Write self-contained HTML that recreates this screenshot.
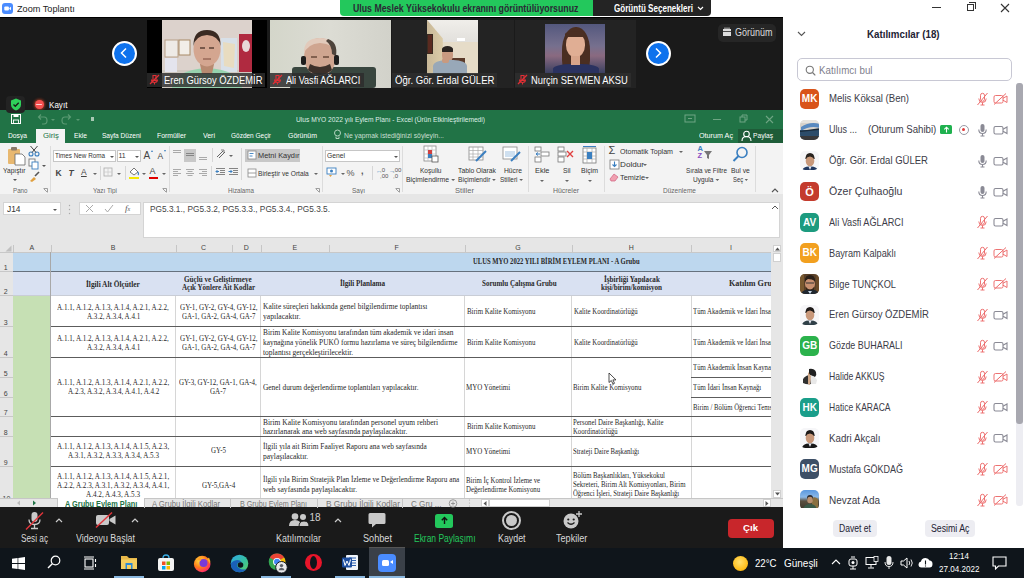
<!DOCTYPE html>
<html><head><meta charset="utf-8">
<style>
*{margin:0;padding:0;box-sizing:border-box}
html,body{width:1024px;height:578px;overflow:hidden;background:#1a1a1a;font-family:"Liberation Sans",sans-serif}
.a{position:absolute}
.t{position:absolute;white-space:nowrap;line-height:1}
.serif{font-family:"Liberation Serif",serif}
.dd{display:inline-block;width:0;height:0;border-left:2px solid transparent;border-right:2px solid transparent;border-top:2.5px solid #666;vertical-align:middle}
</style></head><body>
<div class="a" style="left:0;top:0;width:1024px;height:578px;overflow:hidden">

<!-- ===== TITLE BAR ===== -->
<div class="a" style="left:0;top:0;width:1024px;height:17px;background:#fff"></div>
<div class="a" style="left:0;top:17px;width:783px;height:1px;background:#000"></div>
<!-- zoom logo -->
<svg class="a" style="left:2px;top:3px" width="11" height="11"><rect x="0" y="0" width="11" height="11" rx="3" fill="#4a8cff"/><rect x="2.3" y="3.5" width="4.6" height="4" rx="1" fill="#fff"/><path d="M7.3 4.9L9 3.8V7.2L7.3 6.1Z" fill="#fff"/></svg>
<div class="t" style="transform:scaleX(0.9955);transform-origin:0 0;left:17.2px;top:4.6px;font-size:9.2px;color:#222">Zoom Toplantı</div>

<!-- window controls -->
<div class="a" style="left:932px;top:7px;width:9px;height:1px;background:#333"></div>
<div class="a" style="left:967px;top:4px;width:7px;height:7px;border:1px solid #333"></div>
<div class="a" style="left:969px;top:2px;width:7px;height:7px;border-top:1px solid #333;border-right:1px solid #333"></div>
<svg class="a" style="left:1000px;top:3px" width="10" height="10"><path d="M1 1L9 9M9 1L1 9" stroke="#333" stroke-width="1.1"/></svg>

<!-- share banner -->
<div class="a" style="left:339.5px;top:0;width:253px;height:15.5px;background:#23c85c;border-radius:0 0 0 4px"></div>
<div class="t" style="transform:scaleX(0.8767);transform-origin:0 0;left:353.4px;top:3.7px;font-size:10px;font-weight:bold;color:#2a2a35">Ulus Meslek Yüksekokulu ekranını görüntülüyorsunuz</div>
<div class="a" style="left:592.5px;top:0;width:118.5px;height:15.5px;background:#242424;border-radius:0 0 4px 0"></div>
<div class="t" style="transform:scaleX(0.8066);transform-origin:0 0;left:614.4px;top:3.7px;font-size:10px;font-weight:bold;color:#fff">Görüntü Seçenekleri</div>
<svg class="a" style="left:697px;top:6px" width="7" height="5"><path d="M1 1L3.5 3.5L6 1" stroke="#fff" stroke-width="1.2" fill="none"/></svg>

<!-- ===== ZOOM GALLERY STRIP ===== -->
<!-- prev button -->
<div class="a" style="left:111.5px;top:40.5px;width:25px;height:25px;border-radius:50%;background:#fff"></div>
<div class="a" style="left:113.5px;top:42.5px;width:21px;height:21px;border-radius:50%;background:#0e72ed"></div>
<svg class="a" style="left:118px;top:47px" width="12" height="12"><path d="M8 1.5L3.5 6L8 10.5" stroke="#fff" stroke-width="1.5" fill="none"/></svg>
<!-- next button -->
<div class="a" style="left:645.5px;top:40.5px;width:25px;height:25px;border-radius:50%;background:#fff"></div>
<div class="a" style="left:647.5px;top:42.5px;width:21px;height:21px;border-radius:50%;background:#0e72ed"></div>
<svg class="a" style="left:652px;top:47px" width="12" height="12"><path d="M4 1.5L8.5 6L4 10.5" stroke="#fff" stroke-width="1.5" fill="none"/></svg>

<!-- thumb 1 -->
<div class="a" style="left:147px;top:19.5px;width:120px;height:68px;background:#000"></div>
<svg class="a" style="left:162px;top:19.5px" width="90" height="68">
 <rect width="90" height="68" fill="#dcd2cc"/>
 <rect x="0" y="50" width="90" height="18" fill="#cfc8c0"/>
 <rect x="3" y="20" width="13" height="17" fill="#eeeae6" stroke="#b8a088" stroke-width="1"/>
 <rect x="17" y="20" width="11" height="15" fill="#f2eee8" stroke="#a88a66" stroke-width="1"/>
 <rect x="3" y="38" width="12" height="14" fill="#e4e4ee"/>
 <rect x="59" y="18" width="16" height="34" fill="#d8e0e8"/>
 <path d="M61 22L73 24L72 48L62 46Z" fill="#e8dcc0"/>
 <rect x="77" y="14" width="13" height="38" fill="#b02a40"/>
 <ellipse cx="84" cy="26" rx="4" ry="6" fill="#e8d8d8"/>
 <path d="M10 68Q12 50 45 48Q78 50 80 68Z" fill="#96d2ae"/>
 <path d="M38 44L52 44L50 54L40 54Z" fill="#b88a70"/>
 <ellipse cx="45" cy="29" rx="13.5" ry="17.5" fill="#d4a690"/>
 <path d="M31.5 26Q31 10 45 10Q59 10 58.5 26Q57 16 45 15Q33 16 31.5 26Z" fill="#3a2a22"/>
 <path d="M38 28h5M47 28h5" stroke="#5a4034" stroke-width="1.6"/>
 <path d="M41 39h8" stroke="#8a5a4a" stroke-width="1.2"/>
</svg>
<div class="a" style="left:147px;top:72.5px;width:118px;height:14.5px;background:rgba(45,45,45,0.82)"></div>
<svg class="a" style="left:149px;top:74px" width="11" height="11"><path d="M4 1.5h3v5h-3z M2.5 5.5q0 3 3 3q3 0 3-3 M5.5 8.5v2" stroke="#e02f35" stroke-width="1.1" fill="none"/><path d="M1 10L10 1" stroke="#e02f35" stroke-width="1.2"/></svg>
<div class="t" style="transform:scaleX(0.8932);transform-origin:0 0;left:163.5px;top:75px;font-size:10.5px;color:#fff">Eren Gürsoy ÖZDEMİR</div>

<!-- thumb 2 -->
<svg class="a" style="left:269.5px;top:19.5px" width="121" height="68">
 <defs><linearGradient id="t2g" x1="0" y1="0" x2="1" y2="0"><stop offset="0" stop-color="#d4d6ca"/><stop offset="0.5" stop-color="#dcdcd4"/><stop offset="1" stop-color="#d2d2ca"/></linearGradient></defs>
 <rect width="121" height="68" fill="url(#t2g)"/>
 <rect x="22" y="47" width="84" height="21" rx="3" fill="#39463f"/>
 <path d="M20 68Q22 52 50 52Q78 52 80 68Z" fill="#2e3834"/>
 <ellipse cx="50" cy="37" rx="16" ry="19" fill="#cfa590"/>
 <path d="M34 34Q33 18 50 18Q67 18 66 34Q64 24 50 23Q37 24 34 34Z" fill="#e2cabb"/>
 <path d="M58 19Q68 22 66 36L62 34Q62 25 56 21Z" fill="#4e443c"/>
 <path d="M38 50Q50 60 62 50L60 44Q50 50 40 44Z" fill="#3c302a"/>
 <path d="M41 37h6M53 37h6" stroke="#6a4a3a" stroke-width="1.3"/>
 <rect x="31" y="36" width="5" height="9" rx="2" fill="#1e1e1e"/>
 <rect x="64" y="35" width="5" height="10" rx="2" fill="#1e1e1e"/>
</svg>
<div class="a" style="left:269.5px;top:72.5px;width:94px;height:14.5px;background:rgba(45,45,45,0.85)"></div>
<svg class="a" style="left:272px;top:74px" width="11" height="11"><path d="M4 1.5h3v5h-3z M2.5 5.5q0 3 3 3q3 0 3-3 M5.5 8.5v2" stroke="#e02f35" stroke-width="1.1" fill="none"/><path d="M1 10L10 1" stroke="#e02f35" stroke-width="1.2"/></svg>
<div class="t" style="transform:scaleX(0.8669);transform-origin:0 0;left:286.1px;top:75px;font-size:10.5px;color:#fff">Ali Vasfi AĞLARCI</div>

<!-- thumb 3 -->
<div class="a" style="left:392px;top:19.5px;width:122px;height:68px;background:#232323"></div>
<div class="a" style="left:426.8px;top:19.5px;width:51px;height:54px;overflow:hidden;background:#e4e0da">
 <div class="a" style="left:0;top:0;width:51px;height:22px;background:linear-gradient(180deg,#f0eeea,#e2e0dc)"></div>
 <div class="a" style="left:14px;top:22px;width:37px;height:32px;background:#e6dcc8"></div>
 <div class="a" style="left:0;top:0;width:16px;height:54px;background:linear-gradient(90deg,#c8b898,#dccca8);clip-path:polygon(0 0,100% 35%,100% 100%,0 100%)"></div>
 <div class="a" style="left:0;top:14px;width:6px;height:20px;background:#5a2a20;border:1px solid #3a2a20"></div>
 <div class="a" style="left:30px;top:18px;width:8px;height:3px;background:#fff"></div>
 <div class="a" style="left:24px;top:38px;width:14px;height:8px;background:#5a3a2a"></div>
 <div class="a" style="left:15px;top:28px;width:11px;height:14px;border-radius:45%;background:#c89a80"></div>
 <div class="a" style="left:15px;top:26px;width:11px;height:6px;border-radius:50% 50% 10% 10%;background:#2a2420"></div>
 <div class="a" style="left:6px;top:40px;width:34px;height:16px;border-radius:40% 40% 0 0;background:#98a8b8"></div>
 <div class="a" style="left:15px;top:38px;width:7px;height:5px;border-radius:40%;background:#c89a80"></div>
</div>
<div class="a" style="left:392px;top:72.5px;width:105px;height:14.5px;background:rgba(45,45,45,0.9)"></div>
<div class="t" style="transform:scaleX(0.9118);transform-origin:0 0;left:395.3px;top:75px;font-size:10.5px;color:#fff">Öğr. Gör. Erdal GÜLER</div>

<!-- thumb 4 -->
<div class="a" style="left:514.7px;top:19.5px;width:121.3px;height:68px;background:#232323"></div>
<div class="a" style="left:545px;top:23.5px;width:60px;height:49.5px;overflow:hidden;background:linear-gradient(180deg,#54587e 0%,#76708e 45%,#8a6a80 65%,#3a4060 100%)">
 <div class="a" style="left:17px;top:3px;width:28px;height:48px;border-radius:48% 48% 30% 30%;background:#4a2e22"></div>
 <div class="a" style="left:21px;top:9px;width:19px;height:24px;border-radius:45% 45% 48% 48%;background:#e0ae94"></div>
 <div class="a" style="left:20px;top:7px;width:20px;height:6px;border-radius:50% 50% 0 0;background:#4a2e22"></div>
 <div class="a" style="left:8px;top:40px;width:46px;height:12px;border-radius:40% 40% 0 0;background:#2a3260"></div>
 <div class="a" style="left:26px;top:32px;width:9px;height:9px;background:#d8a48a"></div>
</div>
<div class="a" style="left:514.7px;top:73px;width:116.3px;height:13.5px;background:rgba(45,45,45,0.9)"></div>
<svg class="a" style="left:517px;top:74px" width="11" height="11"><path d="M4 1.5h3v5h-3z M2.5 5.5q0 3 3 3q3 0 3-3 M5.5 8.5v2" stroke="#e02f35" stroke-width="1.1" fill="none"/><path d="M1 10L10 1" stroke="#e02f35" stroke-width="1.2"/></svg>
<div class="t" style="transform:scaleX(0.8918);transform-origin:0 0;left:531.2px;top:75px;font-size:10.5px;color:#fff">Nurçin SEYMEN AKSU</div>

<!-- Görünüm -->
<div class="a" style="left:718px;top:23.5px;width:58px;height:18.5px;border-radius:5px;background:#262626"></div>
<svg class="a" style="left:722px;top:27px" width="10" height="10"><rect x="1" y="2" width="8" height="7" fill="#ddd"/><path d="M3 2v-1.5M5 2v-1.5M7 2v-1.5" stroke="#ddd" stroke-width="1"/><path d="M1 4.5h8" stroke="#262626" stroke-width=".8"/></svg>
<div class="t" style="transform:scaleX(0.8972);transform-origin:0 0;left:734.6px;top:27.5px;font-size:10px;color:#ddd">Görünüm</div>

<!-- Kayıt row -->
<div class="a" style="left:6px;top:95.5px;width:18.5px;height:17.5px;border-radius:4px;background:#232323;z-index:5"></div>
<svg class="a" style="left:9.5px;top:98px;z-index:6" width="12" height="13"><path d="M6 0.5L11 2.5V6.5Q11 10.5 6 12.5Q1 10.5 1 6.5V2.5Z" fill="#2fd05a"/><path d="M3.5 6.5L5.3 8.3L8.7 4.8" stroke="#1a1a1a" stroke-width="1.3" fill="none"/></svg>
<div class="a" style="left:34.5px;top:100.3px;width:9px;height:9px;border-radius:50%;background:#f45050;box-shadow:0 0 2.5px 1px rgba(255,80,40,0.55)"></div>
<div class="a" style="left:36px;top:103.6px;width:6px;height:1.6px;border-radius:1px;background:#ffd0d0"></div>
<div class="t" style="transform:scaleX(0.8496);transform-origin:0 0;left:49.4px;top:99.5px;font-size:9.5px;color:#fff">Kayıt</div>

<!-- ===== EXCEL ===== -->
<!--EXCEL-->
<div class="a" style="left:0;top:109.5px;width:783px;height:33px;background:#217346"></div>
<!-- Save / undo / redo -->
<svg class="a" style="left:10.5px;top:114px" width="10" height="10"><rect x="0.5" y="0.5" width="9" height="9" fill="none" stroke="#fff" stroke-width="1"/><rect x="2.5" y="0.5" width="5" height="2.5" fill="#fff"/><rect x="2.5" y="6" width="5" height="3.5" fill="none" stroke="#fff" stroke-width=".9"/></svg>
<svg class="a" style="left:36px;top:113px" width="12" height="12"><path d="M3 4h5q3 0 3 3.5t-3 3.5h-2M5 1.5L2.5 4L5 6.5" stroke="#5a9a73" stroke-width="1.2" fill="none"/></svg>
<div class="a" style="left:50.5px;top:118.5px;width:0;height:0;border-left:2px solid transparent;border-right:2px solid transparent;border-top:2.5px solid #5a9a73"></div>
<svg class="a" style="left:61px;top:113px" width="12" height="12"><path d="M9 4h-5q-3 0-3 3.5t3 3.5h2M7 1.5L9.5 4L7 6.5" stroke="#5a9a73" stroke-width="1.2" fill="none"/></svg>
<div class="a" style="left:75.5px;top:118.5px;width:0;height:0;border-left:2px solid transparent;border-right:2px solid transparent;border-top:2.5px solid #5a9a73"></div>
<div class="a" style="left:91px;top:117px;width:3px;height:4px;background:#a8c8b4"></div>
<div class="t" style="transform:scaleX(0.9489);transform-origin:0 0;left:296px;top:116px;font-size:7px;color:#dfeee5">Ulus MYO 2022 yılı Eylem Planı - Excel (Ürün Etkinleştirilemedi)</div>
<!-- title bar right icons -->
<svg class="a" style="left:684px;top:114px" width="12" height="9"><rect x="1" y="1" width="10" height="7" fill="none" stroke="#6fa584" stroke-width="1"/><path d="M4 4.5h4" stroke="#6fa584"/></svg>
<div class="a" style="left:713px;top:119px;width:8px;height:1px;background:#6fa584"></div>
<svg class="a" style="left:739px;top:114px" width="9" height="9"><rect x="1" y="3" width="5" height="5" fill="none" stroke="#6fa584"/><path d="M3 3V1h5v5H6" fill="none" stroke="#6fa584"/></svg>
<svg class="a" style="left:765px;top:114.5px" width="9" height="9"><path d="M1 1L8 8M8 1L1 8" stroke="#6fa584" stroke-width="1.1"/></svg>
<!-- tabs -->
<div class="a" style="left:36.2px;top:128.6px;width:28.6px;height:14px;background:#f3f3f3"></div>
<div class="t" style="transform:scaleX(0.8935);transform-origin:0 0;left:7.5px;top:132px;font-size:7.5px;color:#fff">Dosya</div>
<div class="t" style="transform:scaleX(1.0375);transform-origin:0 0;left:43px;top:132px;font-size:7.5px;color:#217346">Giriş</div>
<div class="t" style="transform:scaleX(0.8908);transform-origin:0 0;left:73.5px;top:132px;font-size:7.5px;color:#fff">Ekle</div>
<div class="t" style="transform:scaleX(0.8743);transform-origin:0 0;left:101.5px;top:132px;font-size:7.5px;color:#fff">Sayfa Düzeni</div>
<div class="t" style="transform:scaleX(0.9156);transform-origin:0 0;left:157px;top:132px;font-size:7.5px;color:#fff">Formüller</div>
<div class="t" style="transform:scaleX(0.9275);transform-origin:0 0;left:202.5px;top:132px;font-size:7.5px;color:#fff">Veri</div>
<div class="t" style="transform:scaleX(0.8643);transform-origin:0 0;left:231px;top:132px;font-size:7.5px;color:#fff">Gözden Geçir</div>
<div class="t" style="transform:scaleX(0.9275);transform-origin:0 0;left:288px;top:132px;font-size:7.5px;color:#fff">Görünüm</div>
<svg class="a" style="left:333px;top:129px" width="9" height="11"><circle cx="4.5" cy="4" r="3" fill="none" stroke="#b5d4c0" stroke-width="1"/><path d="M3 7.5v2h3v-2" fill="none" stroke="#b5d4c0"/></svg>
<div class="t" style="transform:scaleX(0.9087);transform-origin:0 0;left:344px;top:132px;font-size:7.5px;color:#c8dfd0">Ne yapmak istediğinizi söyleyin...</div>
<div class="t" style="transform:scaleX(0.9594);transform-origin:0 0;left:699px;top:132px;font-size:7.5px;color:#fff">Oturum Aç</div>
<div class="a" style="left:738.4px;top:129px;width:44.6px;height:13.5px;background:#1e5c38"></div>
<svg class="a" style="left:741px;top:129.5px" width="12" height="12"><circle cx="5.5" cy="4" r="2.8" fill="none" stroke="#fff" stroke-width="1.1"/><path d="M1 11q0-4.5 4.5-4.5q4.5 0 4.5 4.5" fill="none" stroke="#fff" stroke-width="1.1"/></svg>
<div class="t" style="transform:scaleX(0.8883);transform-origin:0 0;left:752.5px;top:132px;font-size:7.5px;color:#fff">Paylaş</div>

<!-- ribbon body -->
<div class="a" style="left:0;top:142.5px;width:783px;height:51.8px;background:#f3f3f3"></div>
<div class="a" style="left:0;top:193.5px;width:783px;height:1px;background:#dcdcdc"></div>
<!-- group separators -->
<div class="a" style="left:50.3px;top:146px;width:1px;height:46px;background:#dcdcdc"></div>
<div class="a" style="left:168.8px;top:146px;width:1px;height:46px;background:#dcdcdc"></div>
<div class="a" style="left:322.4px;top:146px;width:1px;height:46px;background:#dcdcdc"></div>
<div class="a" style="left:402.4px;top:146px;width:1px;height:46px;background:#dcdcdc"></div>
<div class="a" style="left:527.5px;top:146px;width:1px;height:46px;background:#dcdcdc"></div>
<div class="a" style="left:604px;top:146px;width:1px;height:46px;background:#dcdcdc"></div>
<div class="a" style="left:755px;top:146px;width:1px;height:46px;background:#dcdcdc"></div>
<!-- group labels -->
<div class="t" style="transform:scaleX(0.9547);transform-origin:0 0;left:13px;top:187.5px;font-size:6.5px;color:#666">Pano</div>
<div class="t" style="transform:scaleX(0.9815);transform-origin:0 0;left:92.5px;top:187.5px;font-size:6.5px;color:#666">Yazı Tipi</div>
<div class="t" style="transform:scaleX(0.9596);transform-origin:0 0;left:228px;top:187.5px;font-size:6.5px;color:#666">Hizalama</div>
<div class="t" style="transform:scaleX(0.9988);transform-origin:0 0;left:352px;top:187.5px;font-size:6.5px;color:#666">Sayı</div>
<div class="t" style="transform:scaleX(1.1681);transform-origin:0 0;left:454.5px;top:187.5px;font-size:6.5px;color:#666">Stiller</div>
<div class="t" style="transform:scaleX(1.0585);transform-origin:0 0;left:553px;top:187.5px;font-size:6.5px;color:#666">Hücreler</div>
<div class="t" style="transform:scaleX(1.0033);transform-origin:0 0;left:662.5px;top:187.5px;font-size:6.5px;color:#666">Düzenleme</div>
<svg class="a" style="left:43px;top:188px" width="5" height="5"><path d="M0.5 0.5h4v4" fill="none" stroke="#888" stroke-width=".8"/><path d="M1 1L4 4" stroke="#888" stroke-width=".8"/></svg>
<svg class="a" style="left:162px;top:188px" width="5" height="5"><path d="M0.5 0.5h4v4" fill="none" stroke="#888" stroke-width=".8"/><path d="M1 1L4 4" stroke="#888" stroke-width=".8"/></svg>
<svg class="a" style="left:315px;top:188px" width="5" height="5"><path d="M0.5 0.5h4v4" fill="none" stroke="#888" stroke-width=".8"/><path d="M1 1L4 4" stroke="#888" stroke-width=".8"/></svg>
<svg class="a" style="left:395px;top:188px" width="5" height="5"><path d="M0.5 0.5h4v4" fill="none" stroke="#888" stroke-width=".8"/><path d="M1 1L4 4" stroke="#888" stroke-width=".8"/></svg>
<svg class="a" style="left:396px;top:188px" width="5" height="5"></svg>
<svg class="a" style="left:771px;top:188px" width="8" height="5"><path d="M1 4L4 1L7 4" fill="none" stroke="#555" stroke-width="1.1"/></svg>

<!-- Pano group -->
<svg class="a" style="left:7px;top:146px" width="19" height="20"><rect x="1" y="3" width="12" height="15" rx="1" fill="#e8b870"/><rect x="4" y="1" width="6" height="3.5" rx="1" fill="#8a7a6a"/><path d="M8 8h7l3 3v8h-10z" fill="#fff" stroke="#666" stroke-width=".8"/></svg>
<div class="t" style="transform:scaleX(0.9530);transform-origin:0 0;left:3.3px;top:167px;font-size:7px;color:#333">Yapıştır</div>
<div class="a" style="left:13.0px;top:178.5px;width:0;height:0;border-left:2px solid transparent;border-right:2px solid transparent;border-top:2.5px solid #555"></div>
<svg class="a" style="left:28px;top:145px" width="12" height="12"><circle cx="3" cy="9" r="2" fill="none" stroke="#3a7fc0" stroke-width="1.1"/><circle cx="9" cy="9" r="2" fill="none" stroke="#3a7fc0" stroke-width="1.1"/><path d="M4 7.5L9.5 1M8 7.5L2.5 1" stroke="#444" stroke-width="1"/></svg>
<svg class="a" style="left:28px;top:158px" width="11" height="12"><rect x="1" y="1" width="6" height="7" fill="#fff" stroke="#777" stroke-width=".9"/><rect x="4" y="4" width="6" height="7" fill="#fff" stroke="#3a7fc0" stroke-width=".9"/></svg>
<div class="a" style="left:42.0px;top:164.5px;width:0;height:0;border-left:2px solid transparent;border-right:2px solid transparent;border-top:2.5px solid #555"></div>
<svg class="a" style="left:29px;top:171px" width="11" height="11"><path d="M6 5L10 1" stroke="#555" stroke-width="1.6"/><path d="M1 10L5 6L7 8L3 11z" fill="#e0a040"/></svg>

<!-- Yazı Tipi group -->
<div class="a" style="left:53px;top:149.5px;width:63px;height:12px;background:#fff;border:1px solid #c6c6c6"></div>
<div class="t" style="transform:scaleX(0.9029);transform-origin:0 0;left:55px;top:152px;font-size:7px;color:#333">Times New Roma</div>
<div class="a" style="left:109.5px;top:155.5px;width:0;height:0;border-left:2px solid transparent;border-right:2px solid transparent;border-top:2.5px solid #555"></div>
<div class="a" style="left:116.5px;top:149.5px;width:24px;height:12px;background:#fff;border:1px solid #c6c6c6"></div>
<div class="t" style="left:118.5px;top:152px;font-size:7px;color:#333">11</div>
<div class="a" style="left:134.5px;top:155.5px;width:0;height:0;border-left:2px solid transparent;border-right:2px solid transparent;border-top:2.5px solid #555"></div>
<div class="t" style="left:143.5px;top:150.5px;font-size:10px;color:#444">A</div>
<div class="a" style="left:151px;top:149.5px;width:0;height:0;border-left:1.5px solid transparent;border-right:1.5px solid transparent;border-bottom:2px solid #3a7fc0"></div>
<div class="t" style="left:157.5px;top:152px;font-size:8.5px;color:#444">A</div>
<div class="a" style="left:163.5px;top:149.5px;width:0;height:0;border-left:1.5px solid transparent;border-right:1.5px solid transparent;border-top:2px solid #3a7fc0"></div>
<div class="t" style="left:55.5px;top:168.5px;font-size:8.5px;font-weight:bold;color:#444">K</div>
<div class="t" style="left:68.5px;top:168.5px;font-size:8.5px;font-style:italic;font-weight:bold;color:#444">T</div>
<div class="t" style="left:81px;top:168px;font-size:8.5px;text-decoration:underline;color:#444">A</div>
<div class="a" style="left:92.5px;top:172.5px;width:0;height:0;border-left:2px solid transparent;border-right:2px solid transparent;border-top:2.5px solid #666"></div>
<div class="a" style="left:100px;top:166px;width:1px;height:14px;background:#d6d6d6"></div>
<svg class="a" style="left:103px;top:167px" width="10" height="10"><rect x="1" y="1" width="8" height="8" fill="none" stroke="#aaa" stroke-width=".8"/><path d="M5 1v8M1 5h8" stroke="#ccc" stroke-width=".8"/></svg>
<div class="a" style="left:116.5px;top:172.5px;width:0;height:0;border-left:2px solid transparent;border-right:2px solid transparent;border-top:2.5px solid #666"></div>
<div class="a" style="left:124.6px;top:166px;width:1px;height:14px;background:#d6d6d6"></div>
<svg class="a" style="left:128px;top:166px" width="12" height="12"><path d="M2 6L6 2L10 6L6 9z" fill="#fff" stroke="#666" stroke-width=".9"/><path d="M10 6q1 2 0 3" stroke="#3a7fc0" stroke-width="1.2" fill="none"/></svg>
<div class="a" style="left:129px;top:176.5px;width:9.5px;height:2px;background:#f5e800"></div>
<div class="a" style="left:142.0px;top:172.5px;width:0;height:0;border-left:2px solid transparent;border-right:2px solid transparent;border-top:2.5px solid #666"></div>
<div class="t" style="left:149.5px;top:167px;font-size:9px;color:#444">A</div>
<div class="a" style="left:148.5px;top:176.5px;width:9.5px;height:2px;background:#e00000"></div>
<div class="a" style="left:161.5px;top:172.5px;width:0;height:0;border-left:2px solid transparent;border-right:2px solid transparent;border-top:2.5px solid #666"></div>

<!-- Hizalama group -->
<svg class="a" style="left:172px;top:149px" width="10" height="10"><path d="M1 1.5h8M1 3.5h8" stroke="#8a8a8a" stroke-width=".7"/></svg>
<div class="a" style="left:184px;top:149px;width:12.3px;height:12.6px;background:#c8c8c8"></div>
<svg class="a" style="left:185px;top:150px" width="10" height="10"><path d="M1 3.5h8M1 5.5h8" stroke="#6a6a6a" stroke-width=".7"/></svg>
<svg class="a" style="left:197.5px;top:151px" width="10" height="10"><path d="M1 6.5h8M1 8.5h8" stroke="#8a8a8a" stroke-width=".7"/></svg>
<div class="a" style="left:212px;top:148px;width:1px;height:14px;background:#d6d6d6"></div>
<svg class="a" style="left:215px;top:148px" width="12" height="12"><path d="M2 9L8 3M4 10L10 4" stroke="#666" stroke-width="1"/><path d="M6 2l3 0l0 3" fill="none" stroke="#666" stroke-width=".8"/></svg>
<div class="a" style="left:228.5px;top:154.5px;width:0;height:0;border-left:2px solid transparent;border-right:2px solid transparent;border-top:2.5px solid #666"></div>
<svg class="a" style="left:172px;top:167.5px" width="10" height="10"><path d="M1 1.5h8M1 3.5h5M1 5.5h8M1 7.5h5" stroke="#8a8a8a" stroke-width=".7"/></svg>
<svg class="a" style="left:185px;top:167.5px" width="10" height="10"><path d="M1 1.5h8M2.5 3.5h5M1 5.5h8M2.5 7.5h5" stroke="#8a8a8a" stroke-width=".7"/></svg>
<svg class="a" style="left:197.5px;top:167.5px" width="10" height="10"><path d="M1 1.5h8M4 3.5h5M1 5.5h8M4 7.5h5" stroke="#8a8a8a" stroke-width=".7"/></svg>
<div class="a" style="left:211px;top:166px;width:1px;height:14px;background:#d6d6d6"></div>
<svg class="a" style="left:214.5px;top:167px" width="11" height="10"><path d="M1 1.5h9M5 3.5h5M5 5.5h5M1 7.5h9" stroke="#777" stroke-width=".9"/><path d="M4 4.5L1 4.5M2.5 3L1 4.5L2.5 6" stroke="#3a7fc0" stroke-width="1" fill="none"/></svg>
<svg class="a" style="left:227.5px;top:167px" width="11" height="10"><path d="M1 1.5h9M5 3.5h5M5 5.5h5M1 7.5h9" stroke="#777" stroke-width=".9"/><path d="M0.5 4.5L4 4.5M2.5 3L4 4.5L2.5 6" stroke="#3a7fc0" stroke-width="1" fill="none"/></svg>
<div class="a" style="left:241px;top:148px;width:1px;height:32px;background:#d6d6d6"></div>
<div class="a" style="left:245px;top:149px;width:54.6px;height:12.6px;background:#c8c8c8"></div>
<svg class="a" style="left:246.5px;top:150px" width="10" height="10"><rect x="1" y="1" width="8" height="8" fill="#fff" stroke="#888" stroke-width=".8"/><path d="M2.5 3.5h4M2.5 6h3" stroke="#3a7fc0" stroke-width=".9"/></svg>
<div class="t" style="transform:scaleX(0.9855);transform-origin:0 0;left:257.7px;top:152px;font-size:7.5px;color:#333">Metni Kaydır</div>
<svg class="a" style="left:246.5px;top:167.5px" width="10" height="10"><rect x="1" y="1" width="8" height="8" fill="#fff" stroke="#888" stroke-width=".8"/><path d="M1 5h8" stroke="#888" stroke-width=".8"/></svg>
<div class="t" style="transform:scaleX(0.8832);transform-origin:0 0;left:257.7px;top:169.5px;font-size:7.5px;color:#333">Birleştir ve Ortala</div>
<div class="a" style="left:314.0px;top:172.5px;width:0;height:0;border-left:2px solid transparent;border-right:2px solid transparent;border-top:2.5px solid #666"></div>

<!-- Sayı group -->
<div class="a" style="left:325px;top:149.6px;width:75px;height:12px;background:#fff;border:1px solid #c6c6c6"></div>
<div class="t" style="transform:scaleX(0.9632);transform-origin:0 0;left:327px;top:152px;font-size:7px;color:#333">Genel</div>
<div class="a" style="left:393.5px;top:155.5px;width:0;height:0;border-left:2px solid transparent;border-right:2px solid transparent;border-top:2.5px solid #555"></div>
<svg class="a" style="left:326px;top:166px" width="12" height="12"><rect x="1" y="2" width="9" height="6" fill="#fff" stroke="#3a7fc0" stroke-width=".9"/><circle cx="5.5" cy="5" r="1.5" fill="#3a7fc0"/><path d="M3 9l1.5 2l1.5-2" fill="#e0a040"/></svg>
<div class="a" style="left:340.5px;top:172.5px;width:0;height:0;border-left:2px solid transparent;border-right:2px solid transparent;border-top:2.5px solid #666"></div>
<div class="t" style="left:346.5px;top:168.5px;font-size:9px;color:#555">%</div>
<div class="t" style="left:361px;top:167px;font-size:9px;font-weight:bold;color:#555">,</div>
<div class="a" style="left:371.5px;top:166px;width:1px;height:14px;background:#d6d6d6"></div>
<div class="t" style="left:376px;top:167.5px;font-size:6px;color:#3a7fc0">←</div>
<div class="t" style="left:380px;top:167px;font-size:6px;color:#555">,0<br>,00</div>
<div class="t" style="left:389px;top:167.5px;font-size:6px;color:#3a7fc0">→</div>
<div class="t" style="left:393px;top:167px;font-size:6px;color:#555">,00<br>,0</div>

<!-- Stiller group -->
<svg class="a" style="left:422px;top:145px" width="18" height="19"><rect x="2" y="1" width="12" height="15" fill="#fff" stroke="#888" stroke-width=".8"/><path d="M2 5h12M2 9h12M2 13h12M6 1v15M10 1v15" stroke="#bbb" stroke-width=".7"/><rect x="6" y="5" width="4" height="4" fill="#d04040"/><rect x="6" y="9" width="4" height="4" fill="#3a7fc0"/><rect x="10" y="11" width="6" height="6" fill="#fff" stroke="#555" stroke-width=".8"/></svg>
<div class="t" style="transform:scaleX(0.9361);transform-origin:0 0;left:420.3px;top:167px;font-size:7px;color:#333">Koşullu</div>
<div class="t" style="transform:scaleX(0.9818);transform-origin:0 0;left:406.4px;top:176px;font-size:7px;color:#333">Biçimlendirme <span class="dd"></span></div>
<svg class="a" style="left:468px;top:145px" width="20" height="19"><rect x="1" y="2" width="14" height="13" fill="#fff" stroke="#888" stroke-width=".8"/><path d="M1 5.5h14M1 9h14M1 12h14M5 2v13M10 2v13" stroke="#aaa" stroke-width=".7"/><path d="M8 16L18 6" stroke="#3a7fc0" stroke-width="2"/></svg>
<div class="t" style="transform:scaleX(0.9670);transform-origin:0 0;left:458.4px;top:167px;font-size:7px;color:#333">Tablo Olarak</div>
<div class="t" style="transform:scaleX(0.9456);transform-origin:0 0;left:458.4px;top:176px;font-size:7px;color:#333">Biçimlendir <span class="dd"></span></div>
<svg class="a" style="left:502px;top:145px" width="20" height="19"><rect x="1" y="2" width="14" height="12" fill="#fff" stroke="#888" stroke-width=".8"/><rect x="3" y="6" width="10" height="6" fill="#cfe0f0"/><path d="M9 16L18 7" stroke="#3a7fc0" stroke-width="2"/></svg>
<div class="t" style="transform:scaleX(0.9632);transform-origin:0 0;left:503.5px;top:167px;font-size:7px;color:#333">Hücre</div>
<div class="t" style="transform:scaleX(0.9194);transform-origin:0 0;left:500.3px;top:176px;font-size:7px;color:#333">Stilleri <span class="dd"></span></div>

<!-- Hücreler group -->
<svg class="a" style="left:534px;top:146px" width="16" height="17"><rect x="1" y="1" width="6" height="4" fill="#fff" stroke="#777" stroke-width=".8"/><rect x="1" y="11" width="6" height="5" fill="#fff" stroke="#777" stroke-width=".8"/><rect x="7" y="6" width="8" height="4" fill="#fff" stroke="#777" stroke-width=".8"/><path d="M2 8h4M4 6.5L2 8L4 9.5" stroke="#3a7fc0" fill="none"/></svg>
<div class="t" style="transform:scaleX(1.0642);transform-origin:0 0;left:534.5px;top:167px;font-size:7px;color:#333">Ekle</div>
<div class="a" style="left:539.5px;top:179.5px;width:0;height:0;border-left:2px solid transparent;border-right:2px solid transparent;border-top:2.5px solid #666"></div>
<svg class="a" style="left:557px;top:146px" width="17" height="17"><rect x="1" y="1" width="6" height="4" fill="#fff" stroke="#777" stroke-width=".8"/><rect x="1" y="11" width="6" height="5" fill="#fff" stroke="#777" stroke-width=".8"/><rect x="1" y="6" width="8" height="4" fill="#fff" stroke="#777" stroke-width=".8"/><path d="M10 5L16 11M16 5L10 11" stroke="#e04040" stroke-width="1.4"/></svg>
<div class="t" style="transform:scaleX(0.9639);transform-origin:0 0;left:562.5px;top:167px;font-size:7px;color:#333">Sil</div>
<div class="a" style="left:564.5px;top:179.5px;width:0;height:0;border-left:2px solid transparent;border-right:2px solid transparent;border-top:2.5px solid #666"></div>
<svg class="a" style="left:581px;top:145px" width="17" height="19"><rect x="2" y="3" width="13" height="15" fill="#fff" stroke="#777" stroke-width=".8"/><path d="M2 7h13M2 11h13M2 14h13M6 3v15M11 3v15" stroke="#aaa" stroke-width=".7"/><rect x="6" y="7" width="5" height="7" fill="#3a7fc0"/><path d="M2 1.5h13" stroke="#3a7fc0" stroke-width="1"/></svg>
<div class="t" style="transform:scaleX(0.9927);transform-origin:0 0;left:580.5px;top:167px;font-size:7px;color:#333">Biçim</div>
<div class="a" style="left:588.0px;top:179.5px;width:0;height:0;border-left:2px solid transparent;border-right:2px solid transparent;border-top:2.5px solid #666"></div>

<!-- Düzenleme group -->
<div class="t" style="left:608.5px;top:144.5px;font-size:11px;color:#444">Σ</div>
<div class="t" style="transform:scaleX(1.0116);transform-origin:0 0;left:619.5px;top:147.5px;font-size:7px;color:#333">Otomatik Toplam</div>
<div class="a" style="left:678.5px;top:151.0px;width:0;height:0;border-left:2px solid transparent;border-right:2px solid transparent;border-top:2.5px solid #666"></div>
<svg class="a" style="left:608.5px;top:158.5px" width="11" height="11"><rect x="1" y="1" width="9" height="9" fill="#fff" stroke="#777" stroke-width=".8"/><path d="M5.5 2.5v5M3.5 5.5L5.5 7.5L7.5 5.5" stroke="#3a7fc0" stroke-width="1.1" fill="none"/></svg>
<div class="t" style="transform:scaleX(1.1636);transform-origin:0 0;left:619.5px;top:160.5px;font-size:7px;color:#333">Doldur</div>
<div class="a" style="left:643.0px;top:164.0px;width:0;height:0;border-left:2px solid transparent;border-right:2px solid transparent;border-top:2.5px solid #666"></div>
<svg class="a" style="left:608.5px;top:172px" width="11" height="10"><path d="M1 7L5 2L9 5L6 9H2z" fill="#f0a0b0" stroke="#d06080" stroke-width=".7"/></svg>
<div class="t" style="transform:scaleX(1.0533);transform-origin:0 0;left:619.5px;top:173.5px;font-size:7px;color:#333">Temizle</div>
<div class="a" style="left:645.0px;top:177.0px;width:0;height:0;border-left:2px solid transparent;border-right:2px solid transparent;border-top:2.5px solid #666"></div>
<div class="t" style="left:697.5px;top:144.5px;font-size:7.5px;font-weight:bold;color:#3a7fc0">A</div>
<div class="t" style="left:697.5px;top:152px;font-size:7.5px;font-weight:bold;color:#8a4cc0">Z</div>
<svg class="a" style="left:703px;top:150px" width="10" height="10"><path d="M1 1h8L6 5v4L4 8V5z" fill="#777"/></svg>
<div class="t" style="transform:scaleX(0.9086);transform-origin:0 0;left:685.7px;top:167px;font-size:7px;color:#333">Sırala ve Filtre</div>
<div class="t" style="transform:scaleX(0.9375);transform-origin:0 0;left:693.4px;top:176px;font-size:7px;color:#333">Uygula <span class="dd"></span></div>
<svg class="a" style="left:732px;top:146px" width="17" height="17"><circle cx="10" cy="6.5" r="5" fill="none" stroke="#3a7fc0" stroke-width="1.6"/><path d="M6.5 10L1.5 15" stroke="#3a7fc0" stroke-width="2"/></svg>
<div class="t" style="transform:scaleX(0.9657);transform-origin:0 0;left:731.2px;top:167px;font-size:7px;color:#333">Bul ve</div>
<div class="t" style="transform:scaleX(0.8326);transform-origin:0 0;left:733px;top:176px;font-size:7px;color:#333">Seç <span class="dd"></span></div>

<!-- formula bar area -->
<div class="a" style="left:0;top:194.3px;width:783px;height:48.7px;background:#e6e6e6"></div>
<div class="a" style="left:3.2px;top:201.9px;width:58px;height:13.6px;background:#fff;border:1px solid #d4d4d4"></div>
<div class="t" style="transform:scaleX(0.8807);transform-origin:0 0;left:6.5px;top:204px;font-size:9.5px;color:#333">J14</div>
<div class="a" style="left:53.0px;top:208.5px;width:0;height:0;border-left:2px solid transparent;border-right:2px solid transparent;border-top:2.5px solid #555"></div>
<svg class="a" style="left:68px;top:203.5px" width="3" height="11"><circle cx="1.5" cy="1.5" r=".7" fill="#aaa"/><circle cx="1.5" cy="5.5" r=".7" fill="#aaa"/><circle cx="1.5" cy="9.5" r=".7" fill="#aaa"/></svg>
<div class="a" style="left:78.7px;top:201.9px;width:62.3px;height:13.6px;background:#fff;border:1px solid #d4d4d4"></div>
<svg class="a" style="left:85px;top:204px" width="9" height="9"><path d="M1 1L8 8M8 1L1 8" stroke="#aaa" stroke-width="1"/></svg>
<svg class="a" style="left:104px;top:204px" width="10" height="9"><path d="M1 5L3.5 8L9 1" stroke="#aaa" stroke-width="1" fill="none"/></svg>
<div class="t" style="left:125px;top:203.5px;font-size:9px;font-style:italic;color:#555;font-family:'Liberation Serif',serif">f<span style="font-size:6px">x</span></div>
<div class="a" style="left:143.4px;top:201.9px;width:636.5px;height:35.7px;background:#fff;border:1px solid #d4d4d4"></div>
<div class="t" style="transform:scaleX(0.9226);transform-origin:0 0;left:150px;top:205px;font-size:9px;color:#444">PG5.3.1., PG5.3.2, PG5.3.3., PG5.3.4., PG5.3.5.</div>
<svg class="a" style="left:771px;top:205px" width="8" height="5"><path d="M1 4L4 1L7 4" fill="none" stroke="#555" stroke-width="1"/></svg>

<!--GRIDSTART-->
<div class="a" style="left:0px;top:243.4px;width:771px;height:8.8px;background:#e6e6e6;"></div>
<div class="a" style="left:0px;top:252px;width:771px;height:0.6px;background:#c8c8c8;"></div>
<div class="a" style="left:13px;top:244.5px;width:0.8px;height:7.5px;background:#c6c6c6;"></div>
<div class="a" style="left:50.6px;top:244.5px;width:0.8px;height:7.5px;background:#c6c6c6;"></div>
<div class="a" style="left:175.6px;top:244.5px;width:0.8px;height:7.5px;background:#c6c6c6;"></div>
<div class="a" style="left:231.5px;top:244.5px;width:0.8px;height:7.5px;background:#c6c6c6;"></div>
<div class="a" style="left:261px;top:244.5px;width:0.8px;height:7.5px;background:#c6c6c6;"></div>
<div class="a" style="left:328.6px;top:244.5px;width:0.8px;height:7.5px;background:#c6c6c6;"></div>
<div class="a" style="left:464.7px;top:244.5px;width:0.8px;height:7.5px;background:#c6c6c6;"></div>
<div class="a" style="left:571.6px;top:244.5px;width:0.8px;height:7.5px;background:#c6c6c6;"></div>
<div class="a" style="left:690.8px;top:244.5px;width:0.8px;height:7.5px;background:#c6c6c6;"></div>
<div class="t" style="left:28.8px;top:244.3px;width:6px;text-align:center;font-size:7px;color:#444">A</div>
<div class="t" style="left:110.1px;top:244.3px;width:6px;text-align:center;font-size:7px;color:#444">B</div>
<div class="t" style="left:200.6px;top:244.3px;width:6px;text-align:center;font-size:7px;color:#444">C</div>
<div class="t" style="left:243.2px;top:244.3px;width:6px;text-align:center;font-size:7px;color:#444">D</div>
<div class="t" style="left:291.8px;top:244.3px;width:6px;text-align:center;font-size:7px;color:#444">E</div>
<div class="t" style="left:393.6px;top:244.3px;width:6px;text-align:center;font-size:7px;color:#444">F</div>
<div class="t" style="left:515.1px;top:244.3px;width:6px;text-align:center;font-size:7px;color:#444">G</div>
<div class="t" style="left:628.2px;top:244.3px;width:6px;text-align:center;font-size:7px;color:#444">H</div>
<div class="t" style="left:727.9px;top:244.3px;width:6px;text-align:center;font-size:7px;color:#444">I</div>
<svg class="a" style="left:5px;top:245px" width="7" height="7"><path d="M6.5 0.5V6.5H0.5Z" fill="#c0c0c0"/></svg>
<div class="a" style="left:0px;top:252.6px;width:13px;height:245.2px;background:#e6e6e6;"></div>
<div class="a" style="left:0px;top:271.09999999999997px;width:13px;height:0.7px;background:#c8c8c8;"></div>
<div class="t" style="left:0;top:263.9px;width:11.5px;text-align:center;font-size:7px;color:#444">1</div>
<div class="a" style="left:0px;top:295.3px;width:13px;height:0.7px;background:#c8c8c8;"></div>
<div class="t" style="left:0;top:288.1px;width:11.5px;text-align:center;font-size:7px;color:#444">2</div>
<div class="a" style="left:0px;top:326.2px;width:13px;height:0.7px;background:#c8c8c8;"></div>
<div class="t" style="left:0;top:319.0px;width:11.5px;text-align:center;font-size:7px;color:#444">3</div>
<div class="a" style="left:0px;top:357.2px;width:13px;height:0.7px;background:#c8c8c8;"></div>
<div class="t" style="left:0;top:350.0px;width:11.5px;text-align:center;font-size:7px;color:#444">4</div>
<div class="a" style="left:0px;top:377.2px;width:13px;height:0.7px;background:#c8c8c8;"></div>
<div class="t" style="left:0;top:370.0px;width:11.5px;text-align:center;font-size:7px;color:#444">5</div>
<div class="a" style="left:0px;top:397.3px;width:13px;height:0.7px;background:#c8c8c8;"></div>
<div class="t" style="left:0;top:390.1px;width:11.5px;text-align:center;font-size:7px;color:#444">6</div>
<div class="a" style="left:0px;top:416.09999999999997px;width:13px;height:0.7px;background:#c8c8c8;"></div>
<div class="t" style="left:0;top:408.9px;width:11.5px;text-align:center;font-size:7px;color:#444">7</div>
<div class="a" style="left:0px;top:435.7px;width:13px;height:0.7px;background:#c8c8c8;"></div>
<div class="t" style="left:0;top:428.5px;width:11.5px;text-align:center;font-size:7px;color:#444">8</div>
<div class="a" style="left:0px;top:466.2px;width:13px;height:0.7px;background:#c8c8c8;"></div>
<div class="t" style="left:0;top:459.0px;width:11.5px;text-align:center;font-size:7px;color:#444">9</div>
<div class="a" style="left:0px;top:499.7px;width:13px;height:0.7px;background:#c8c8c8;"></div>
<div class="t" style="left:0;top:495px;width:13px;text-align:center;font-size:7px;color:#444">10</div>
<div class="a" style="left:12.6px;top:252px;width:0.7px;height:246px;background:#c0c0c0;"></div>
<div class="a" style="left:13.3px;top:295.6px;width:37.3px;height:202.2px;background:#c6e0b4;"></div>
<div class="a" style="left:13.3px;top:252.6px;width:757.5px;height:18.8px;background:#bdd7ee;"></div>
<div class="a" style="left:13.3px;top:271.4px;width:757.5px;height:24.2px;background:#d9e1f2;"></div>
<div class="a" style="left:13.3px;top:270.6px;width:757.5px;height:1.5px;background:#66717e;"></div>
<div class="a" style="left:13.3px;top:295.2px;width:757.5px;height:0.7px;background:#c9cdd6;"></div>
<div class="a" style="left:50.9px;top:295.9px;width:720px;height:201.9px;background:#ffffff;"></div>
<div class="a" style="left:50.3px;top:252px;width:0.8px;height:246px;background:#a8a8a8;"></div>
<div class="a" style="left:175.2px;top:295.9px;width:0.8px;height:202px;background:#d6d6d6;"></div>
<div class="a" style="left:260.1px;top:295.9px;width:0.8px;height:202px;background:#d6d6d6;"></div>
<div class="a" style="left:464.2px;top:295.9px;width:0.8px;height:202px;background:#d6d6d6;"></div>
<div class="a" style="left:570.8px;top:295.9px;width:0.8px;height:202px;background:#d6d6d6;"></div>
<div class="a" style="left:690.5px;top:295.9px;width:0.8px;height:202px;background:#d6d6d6;"></div>
<div class="a" style="left:50.9px;top:326.0px;width:720px;height:1.1px;background:#5c5c5c;"></div>
<div class="a" style="left:50.9px;top:357.0px;width:720px;height:1.1px;background:#5c5c5c;"></div>
<div class="a" style="left:50.9px;top:415.9px;width:720px;height:1.1px;background:#5c5c5c;"></div>
<div class="a" style="left:50.9px;top:435.5px;width:720px;height:1.1px;background:#5c5c5c;"></div>
<div class="a" style="left:50.9px;top:466.0px;width:720px;height:1.1px;background:#5c5c5c;"></div>
<div class="a" style="left:690.7px;top:376.8px;width:80px;height:1.1px;background:#5c5c5c;"></div>
<div class="a" style="left:690.7px;top:396.6px;width:80px;height:1.1px;background:#5c5c5c;"></div>
<div class="t" style="transform:scaleX(0.8809);transform-origin:0 0;left:473.2px;top:257.9px;font-size:7.5px;color:#2a2a2a;font-weight:bold;font-family:'Liberation Serif',serif;">ULUS MYO 2022 YILI BİRİM EYLEM PLANI - A Grubu</div>
<div class="t" style="transform:scaleX(0.9782);transform-origin:0 0;left:86px;top:280.5px;font-size:7.5px;color:#2a2a2a;font-weight:bold;font-family:'Liberation Serif',serif;">İlgili Alt Ölçütler</div>
<div class="t" style="transform:scaleX(0.9504);transform-origin:0 0;left:184.3px;top:275.6px;font-size:7.5px;color:#2a2a2a;font-weight:bold;font-family:'Liberation Serif',serif;">Güçlü ve Geliştirmeye</div>
<div class="t" style="transform:scaleX(0.9344);transform-origin:0 0;left:181.5px;top:283.8px;font-size:7.5px;color:#2a2a2a;font-weight:bold;font-family:'Liberation Serif',serif;">Açık Yönlere Ait Kodlar</div>
<div class="t" style="transform:scaleX(0.9536);transform-origin:0 0;left:340.3px;top:279.5px;font-size:7.5px;color:#2a2a2a;font-weight:bold;font-family:'Liberation Serif',serif;">İlgili Planlama</div>
<div class="t" style="transform:scaleX(0.9383);transform-origin:0 0;left:481.5px;top:279.7px;font-size:7.5px;color:#2a2a2a;font-weight:bold;font-family:'Liberation Serif',serif;">Sorumlu Çalışma Grubu</div>
<div class="t" style="transform:scaleX(0.9522);transform-origin:0 0;left:603.5px;top:275.9px;font-size:7.5px;color:#2a2a2a;font-weight:bold;font-family:'Liberation Serif',serif;">İşbirliği Yapılacak</div>
<div class="t" style="transform:scaleX(0.9503);transform-origin:0 0;left:601px;top:284.4px;font-size:7.5px;color:#2a2a2a;font-weight:bold;font-family:'Liberation Serif',serif;">kişi/birim/komisyon</div>
<div class="a" style="left:690.8px;top:271.4px;width:80px;height:24px;overflow:hidden">
<div class="t" style="transform:scaleX(1.0802);transform-origin:0 0;left:38.0px;top:8.3px;font-size:7.5px;color:#2a2a2a;font-weight:bold;font-family:'Liberation Serif',serif;">Katılım Grubu</div>
</div>
<div class="t" style="transform:scaleX(0.8848);transform-origin:0 0;left:56.9px;top:303.8px;font-size:8px;color:#272727;font-family:'Liberation Serif',serif;">A.1.1, A.1.2, A.1.3, A.1.4, A.2.1, A.2.2,</div>
<div class="t" style="transform:scaleX(0.8817);transform-origin:0 0;left:86.5px;top:312.8px;font-size:8px;color:#272727;font-family:'Liberation Serif',serif;">A.3.2, A.3.4, A.4.1</div>
<div class="t" style="transform:scaleX(0.8875);transform-origin:0 0;left:179.5px;top:303.8px;font-size:8px;color:#272727;font-family:'Liberation Serif',serif;">GY-1, GY-2, GY-4, GY-12,</div>
<div class="t" style="transform:scaleX(0.8660);transform-origin:0 0;left:181.5px;top:312.8px;font-size:8px;color:#272727;font-family:'Liberation Serif',serif;">GA-1, GA-2, GA-4, GA-7</div>
<div class="t" style="transform:scaleX(0.9308);transform-origin:0 0;left:262.5px;top:302.6px;font-size:8px;color:#272727;font-family:'Liberation Serif',serif;">Kalite süreçleri hakkında genel bilgilendirme toplantısı</div>
<div class="t" style="transform:scaleX(0.9561);transform-origin:0 0;left:262.5px;top:312.8px;font-size:8px;color:#272727;font-family:'Liberation Serif',serif;">yapılacaktır.</div>
<div class="t" style="transform:scaleX(0.8597);transform-origin:0 0;left:466.6px;top:307.6px;font-size:8px;color:#272727;font-family:'Liberation Serif',serif;">Birim Kalite Komisyonu</div>
<div class="t" style="transform:scaleX(0.8508);transform-origin:0 0;left:573.6px;top:307.6px;font-size:8px;color:#272727;font-family:'Liberation Serif',serif;">Kalite Koordinatörlüğü</div>
<div class="t" style="transform:scaleX(0.8848);transform-origin:0 0;left:56.9px;top:334.9px;font-size:8px;color:#272727;font-family:'Liberation Serif',serif;">A.1.1, A.1.2, A.1.3, A.1.4, A.2.1, A.2.2,</div>
<div class="t" style="transform:scaleX(0.8817);transform-origin:0 0;left:86.5px;top:343.9px;font-size:8px;color:#272727;font-family:'Liberation Serif',serif;">A.3.2, A.3.4, A.4.1</div>
<div class="t" style="transform:scaleX(0.8875);transform-origin:0 0;left:179.5px;top:334.9px;font-size:8px;color:#272727;font-family:'Liberation Serif',serif;">GY-1, GY-2, GY-4, GY-12,</div>
<div class="t" style="transform:scaleX(0.8660);transform-origin:0 0;left:181.5px;top:343.9px;font-size:8px;color:#272727;font-family:'Liberation Serif',serif;">GA-1, GA-2, GA-4, GA-7</div>
<div class="t" style="transform:scaleX(0.9220);transform-origin:0 0;left:262.5px;top:329.1px;font-size:8px;color:#272727;font-family:'Liberation Serif',serif;">Birim Kalite Komisyonu tarafından tüm akademik ve idari insan</div>
<div class="t" style="transform:scaleX(0.9206);transform-origin:0 0;left:262.5px;top:338.8px;font-size:8px;color:#272727;font-family:'Liberation Serif',serif;">kaynağına yönelik PUKÖ formu hazırlama ve süreç bilgilendirme</div>
<div class="t" style="transform:scaleX(0.9312);transform-origin:0 0;left:262.5px;top:348.8px;font-size:8px;color:#272727;font-family:'Liberation Serif',serif;">toplantısı gerçekleştirilecektir.</div>
<div class="t" style="transform:scaleX(0.8597);transform-origin:0 0;left:466.6px;top:338.6px;font-size:8px;color:#272727;font-family:'Liberation Serif',serif;">Birim Kalite Komisyonu</div>
<div class="t" style="transform:scaleX(0.8508);transform-origin:0 0;left:573.6px;top:338.6px;font-size:8px;color:#272727;font-family:'Liberation Serif',serif;">Kalite Koordinatörlüğü</div>
<div class="t" style="transform:scaleX(0.8872);transform-origin:0 0;left:57px;top:378.6px;font-size:8px;color:#272727;font-family:'Liberation Serif',serif;">A.1.1, A.1.2, A.1.3, A.1.4, A.2.1, A.2.2,</div>
<div class="t" style="transform:scaleX(0.8863);transform-origin:0 0;left:67.6px;top:388.0px;font-size:8px;color:#272727;font-family:'Liberation Serif',serif;">A.2.3, A.3.2, A.3.4, A.4.1, A.4.2</div>
<div class="t" style="transform:scaleX(0.8731);transform-origin:0 0;left:179.2px;top:378.6px;font-size:8px;color:#272727;font-family:'Liberation Serif',serif;">GY-3, GY-12, GA-1, GA-4,</div>
<div class="t" style="transform:scaleX(0.8782);transform-origin:0 0;left:210px;top:388.0px;font-size:8px;color:#272727;font-family:'Liberation Serif',serif;">GA-7</div>
<div class="t" style="transform:scaleX(0.9223);transform-origin:0 0;left:262.5px;top:383.6px;font-size:8px;color:#272727;font-family:'Liberation Serif',serif;">Genel durum değerlendirme toplantıları yapılacaktır.</div>
<div class="t" style="transform:scaleX(0.8736);transform-origin:0 0;left:466.3px;top:383.6px;font-size:8px;color:#272727;font-family:'Liberation Serif',serif;">MYO Yönetimi</div>
<div class="t" style="transform:scaleX(0.8597);transform-origin:0 0;left:573px;top:383.6px;font-size:8px;color:#272727;font-family:'Liberation Serif',serif;">Birim Kalite Komisyonu</div>
<div class="t" style="transform:scaleX(0.9316);transform-origin:0 0;left:262.5px;top:418.8px;font-size:8px;color:#272727;font-family:'Liberation Serif',serif;">Birim Kalite Komisyonu tarafından personel uyum rehberi</div>
<div class="t" style="transform:scaleX(0.9374);transform-origin:0 0;left:262.5px;top:428.1px;font-size:8px;color:#272727;font-family:'Liberation Serif',serif;">hazırlanarak ana web sayfasında paylaşılacaktır.</div>
<div class="t" style="transform:scaleX(0.8597);transform-origin:0 0;left:466.6px;top:423.2px;font-size:8px;color:#272727;font-family:'Liberation Serif',serif;">Birim Kalite Komisyonu</div>
<div class="t" style="transform:scaleX(0.8451);transform-origin:0 0;left:573px;top:418.5px;font-size:8px;color:#272727;font-family:'Liberation Serif',serif;">Personel Daire Başkanlığı, Kalite</div>
<div class="t" style="transform:scaleX(0.8382);transform-origin:0 0;left:573px;top:427.9px;font-size:8px;color:#272727;font-family:'Liberation Serif',serif;">Koordinatörlüğü</div>
<div class="t" style="transform:scaleX(0.8872);transform-origin:0 0;left:57px;top:443.2px;font-size:8px;color:#272727;font-family:'Liberation Serif',serif;">A.1.1, A.1.2, A.1.3, A.1.4, A.1.5, A.2.3,</div>
<div class="t" style="transform:scaleX(0.8815);transform-origin:0 0;left:67.6px;top:452.0px;font-size:8px;color:#272727;font-family:'Liberation Serif',serif;">A.3.1, A.3.2, A.3.3, A.3.4, A.5.3</div>
<div class="t" style="transform:scaleX(0.8649);transform-origin:0 0;left:210.6px;top:447.4px;font-size:8px;color:#272727;font-family:'Liberation Serif',serif;">GY-5</div>
<div class="t" style="transform:scaleX(0.9216);transform-origin:0 0;left:262.5px;top:443.2px;font-size:8px;color:#272727;font-family:'Liberation Serif',serif;">İlgili yıla ait Birim Faaliyet Raporu ana web sayfasında</div>
<div class="t" style="transform:scaleX(0.9377);transform-origin:0 0;left:262.5px;top:453.2px;font-size:8px;color:#272727;font-family:'Liberation Serif',serif;">paylaşılacaktır.</div>
<div class="t" style="transform:scaleX(0.8736);transform-origin:0 0;left:466.3px;top:447.8px;font-size:8px;color:#272727;font-family:'Liberation Serif',serif;">MYO Yönetimi</div>
<div class="t" style="transform:scaleX(0.8370);transform-origin:0 0;left:573px;top:447.8px;font-size:8px;color:#272727;font-family:'Liberation Serif',serif;">Strateji Daire Başkanlığı</div>
<div class="t" style="transform:scaleX(0.8872);transform-origin:0 0;left:57px;top:472.9px;font-size:8px;color:#272727;font-family:'Liberation Serif',serif;">A.1.1, A.1.2, A.1.3, A.1.4, A.1.5, A.2.1,</div>
<div class="t" style="transform:scaleX(0.8872);transform-origin:0 0;left:57px;top:481.6px;font-size:8px;color:#272727;font-family:'Liberation Serif',serif;">A.2.2, A.2.3, A.3.1, A.3.2, A.3.4, A.4.1,</div>
<div class="t" style="transform:scaleX(0.8933);transform-origin:0 0;left:86px;top:490.9px;font-size:8px;color:#272727;font-family:'Liberation Serif',serif;">A.4.2, A.4.3, A.5.3</div>
<div class="t" style="transform:scaleX(0.8839);transform-origin:0 0;left:201.8px;top:481.6px;font-size:8px;color:#272727;font-family:'Liberation Serif',serif;">GY-5,GA-4</div>
<div class="t" style="transform:scaleX(0.9021);transform-origin:0 0;left:262.5px;top:476.3px;font-size:8px;color:#272727;font-family:'Liberation Serif',serif;">İlgili yıla Birim Stratejik Plan İzleme ve Değerlendirme Raporu ana</div>
<div class="t" style="transform:scaleX(0.9477);transform-origin:0 0;left:262.5px;top:486.3px;font-size:8px;color:#272727;font-family:'Liberation Serif',serif;">web sayfasında paylaşılacaktır.</div>
<div class="t" style="transform:scaleX(0.8508);transform-origin:0 0;left:466.3px;top:476.8px;font-size:8px;color:#272727;font-family:'Liberation Serif',serif;">Birim İç Kontrol İzleme ve</div>
<div class="t" style="transform:scaleX(0.8487);transform-origin:0 0;left:466.3px;top:486.3px;font-size:8px;color:#272727;font-family:'Liberation Serif',serif;">Değerlendirme Komisyonu</div>
<div class="t" style="transform:scaleX(0.8455);transform-origin:0 0;left:573px;top:472.1px;font-size:8px;color:#272727;font-family:'Liberation Serif',serif;">Bölüm Başkanlıkları, Yüksekokul</div>
<div class="t" style="transform:scaleX(0.8523);transform-origin:0 0;left:573px;top:481.3px;font-size:8px;color:#272727;font-family:'Liberation Serif',serif;">Sekreteri, Birim Alt Komisyonları, Birim</div>
<div class="t" style="transform:scaleX(0.8343);transform-origin:0 0;left:573px;top:490.4px;font-size:8px;color:#272727;font-family:'Liberation Serif',serif;">Öğrenci İşleri, Strateji Daire Başkanlığı</div>
<div class="a" style="left:690.8px;top:295.9px;width:80px;height:130px;overflow:hidden">
<div class="t" style="left:2px;top:11.7px;font-size:8px;color:#272727;font-family:'Liberation Serif',serif;transform:scaleX(0.846);transform-origin:0 0">Tüm Akademik ve İdari İnsan Kaynağı</div>
<div class="t" style="left:2px;top:42.7px;font-size:8px;color:#272727;font-family:'Liberation Serif',serif;transform:scaleX(0.846);transform-origin:0 0">Tüm Akademik ve İdari İnsan Kaynağı</div>
<div class="t" style="left:2px;top:68.3px;font-size:8px;color:#272727;font-family:'Liberation Serif',serif;transform:scaleX(0.846);transform-origin:0 0">Tüm Akademik İnsan Kaynağı</div>
<div class="t" style="left:2px;top:87.9px;font-size:8px;color:#272727;font-family:'Liberation Serif',serif;transform:scaleX(0.846);transform-origin:0 0">Tüm İdari İnsan Kaynağı</div>
<div class="t" style="left:2px;top:107.7px;font-size:8px;color:#272727;font-family:'Liberation Serif',serif;transform:scaleX(0.846);transform-origin:0 0">Birim / Bölüm Öğrenci Temsilcisi</div>
</div>
<svg class="a" style="left:607.5px;top:371.5px" width="9" height="13"><path d="M1 1V10.5L3.3 8.5L5 12L6.5 11.3L4.9 7.9H8Z" fill="#fff" stroke="#222" stroke-width=".8"/></svg>
<div class="a" style="left:771px;top:243.4px;width:12px;height:254.4px;background:#e6e6e6;"></div>
<div class="a" style="left:773px;top:244.7px;width:8.2px;height:7.6px;background:#fff;border:0.6px solid #d0d0d0"></div>
<svg class="a" style="left:774.5px;top:246.5px" width="5" height="4"><path d="M0 3.5L2.5 0.5L5 3.5Z" fill="#555"/></svg>
<div class="a" style="left:773px;top:253.3px;width:8.2px;height:9px;background:#fff;border:0.6px solid #d0d0d0"></div>
<div class="a" style="left:773px;top:489.8px;width:8.2px;height:8px;background:#fff;border:0.6px solid #d0d0d0"></div>
<svg class="a" style="left:774.5px;top:492px" width="5" height="4"><path d="M0 0.5L2.5 3.5L5 0.5Z" fill="#555"/></svg>
<div class="a" style="left:0px;top:497.8px;width:783px;height:9.7px;background:#e6e6e6;"></div>
<div class="a" style="left:0px;top:497.8px;width:783px;height:0.6px;background:#c6c6c6;"></div>
<svg class="a" style="left:16px;top:500px" width="5" height="6"><path d="M4 0.5L1 3L4 5.5" fill="#bbb"/></svg>
<svg class="a" style="left:32px;top:500px" width="5" height="6"><path d="M1 0.5L4 3L1 5.5Z" fill="#217346"/></svg>
<div class="a" style="left:57px;top:497.8px;width:87px;height:9.7px;background:#ffffff;"></div>
<div class="a" style="left:56.5px;top:497.8px;width:0.6px;height:9.7px;background:#c6c6c6;"></div>
<div class="a" style="left:57px;top:497.8px;width:726px;height:9.7px;overflow:hidden">
<div class="t" style="transform:scaleX(0.8152);transform-origin:0 0;left:7.700000000000003px;top:2.2px;font-size:9px;color:#217346;font-weight:bold;">A Grubu Eylem Planı</div>
<div class="t" style="transform:scaleX(0.8548);transform-origin:0 0;left:95.30000000000001px;top:2.2px;font-size:9px;color:#777;">A Grubu İlgili Kodlar</div>
<div class="t" style="transform:scaleX(0.7972);transform-origin:0 0;left:183px;top:2.2px;font-size:9px;color:#777;">B Grubu Eylem Planı</div>
<div class="t" style="transform:scaleX(0.9245);transform-origin:0 0;left:268.6px;top:2.2px;font-size:9px;color:#777;">B Grubu İlgili Kodlar</div>
<div class="t" style="transform:scaleX(0.8996);transform-origin:0 0;left:354px;top:2.2px;font-size:9px;color:#777;">C Gru ...</div>
</div>
<div class="a" style="left:144px;top:498.5px;width:0.6px;height:9px;background:#c6c6c6;"></div>
<div class="a" style="left:230px;top:498.5px;width:0.6px;height:9px;background:#c6c6c6;"></div>
<div class="a" style="left:316.5px;top:498.5px;width:0.6px;height:9px;background:#c6c6c6;"></div>
<div class="a" style="left:402px;top:498.5px;width:0.6px;height:9px;background:#c6c6c6;"></div>
<svg class="a" style="left:448px;top:498.5px" width="10" height="9"><circle cx="5" cy="4.5" r="3.8" fill="none" stroke="#888" stroke-width=".8"/><path d="M5 2.5v4M3 4.5h4" stroke="#888" stroke-width=".8"/></svg>
<svg class="a" style="left:468px;top:499px" width="3" height="8"><circle cx="1.5" cy="1" r=".6" fill="#aaa"/><circle cx="1.5" cy="4" r=".6" fill="#aaa"/><circle cx="1.5" cy="7" r=".6" fill="#aaa"/></svg>
<div class="a" style="left:480.5px;top:499px;width:290px;height:8px;background:#e6e6e6;"></div>
<div class="a" style="left:480.5px;top:499px;width:8px;height:8px;background:#fff;border:0.6px solid #d0d0d0"></div>
<svg class="a" style="left:482.5px;top:501px" width="4" height="5"><path d="M3.5 0L0.5 2.5L3.5 5Z" fill="#555"/></svg>
<div class="a" style="left:489px;top:499px;width:60.5px;height:8px;background:#fff;border:0.6px solid #d0d0d0"></div>
<div class="a" style="left:762.5px;top:499px;width:8px;height:8px;background:#fff;border:0.6px solid #d0d0d0"></div>
<svg class="a" style="left:765px;top:501px" width="4" height="5"><path d="M0.5 0L3.5 2.5L0.5 5Z" fill="#555"/></svg>
<!--GRIDEND-->

<!--BOTSTART-->
<div class="a" style="left:0;top:507.5px;width:783px;height:40px;background:#1a1a1a"></div>
<svg class="a" style="left:25px;top:511px" width="19" height="19"><rect x="6.5" y="1" width="6" height="10" rx="3" fill="#c9c9c9"/><path d="M4 8.5q0 5 5.5 5q5.5 0 5.5-5" fill="none" stroke="#c9c9c9" stroke-width="1.3"/><path d="M9.5 13.5v3.5M6 17.5h7" stroke="#c9c9c9" stroke-width="1.3"/><path d="M1 18.5L18 1.5" stroke="#e0353b" stroke-width="1.4"/></svg>
<div class="t" style="transform:scaleX(0.8232);transform-origin:0 0;left:21px;top:534px;font-size:10px;color:#d8d8d8">Sesi aç</div>
<svg class="a" style="left:55px;top:518px" width="8" height="5"><path d="M1 4L4 1L7 4" fill="none" stroke="#ccc" stroke-width="1.2"/></svg>
<svg class="a" style="left:95px;top:512px" width="22" height="16"><rect x="1" y="3" width="13" height="10" rx="2" fill="#c9c9c9"/><path d="M14.5 7L20.5 3.5V12.5L14.5 9Z" fill="#c9c9c9"/><path d="M1 15.5L17 0.5" stroke="#e0353b" stroke-width="1.4"/></svg>
<div class="t" style="transform:scaleX(0.8868);transform-origin:0 0;left:76px;top:534px;font-size:10px;color:#d8d8d8">Videoyu Başlat</div>
<svg class="a" style="left:130.5px;top:518px" width="8" height="5"><path d="M1 4L4 1L7 4" fill="none" stroke="#ccc" stroke-width="1.2"/></svg>
<svg class="a" style="left:288px;top:512px" width="22" height="16"><circle cx="7" cy="4.5" r="3.3" fill="#c9c9c9"/><path d="M1 14q0-6 6-6q6 0 6 6z" fill="#c9c9c9"/><circle cx="15" cy="5" r="3" fill="#c9c9c9"/><path d="M11 14.5q0-5.5 5-5.5q5 0 5 5.5z" fill="#c9c9c9" stroke="#1a1a1a" stroke-width="1"/></svg>
<div class="t" style="left:309.5px;top:512.5px;font-size:10px;color:#d0d0d0">18</div>
<div class="t" style="transform:scaleX(0.8977);transform-origin:0 0;left:275.6px;top:534px;font-size:10px;color:#d8d8d8">Katılımcılar</div>
<svg class="a" style="left:334px;top:518px" width="8" height="5"><path d="M1 4L4 1L7 4" fill="none" stroke="#ccc" stroke-width="1.2"/></svg>
<svg class="a" style="left:368px;top:512px" width="18" height="17"><path d="M2 1h14q1.5 0 1.5 1.5v8q0 1.5-1.5 1.5h-8l-4 3.5v-3.5h-2q-1.5 0-1.5-1.5v-8q0-1.5 1.5-1.5z" fill="#c9c9c9"/></svg>
<div class="t" style="transform:scaleX(0.9147);transform-origin:0 0;left:363px;top:534px;font-size:10px;color:#d8d8d8">Sohbet</div>
<div class="a" style="left:369px;top:546.5px;width:35.5px;height:1px;background:#555"></div>
<div class="a" style="left:435.4px;top:514.3px;width:18px;height:13.3px;border-radius:2.5px;background:#23c85c"></div>
<svg class="a" style="left:440px;top:516px" width="9" height="9"><path d="M4.5 8V1.5M1.8 4.2L4.5 1.5L7.2 4.2" fill="none" stroke="#111" stroke-width="1.4"/></svg>
<div class="t" style="transform:scaleX(0.8446);transform-origin:0 0;left:413.5px;top:534px;font-size:10px;color:#23c85c">Ekran Paylaşımı</div>
<div class="a" style="left:502px;top:511px;width:19px;height:19px;border-radius:50%;border:2px solid #c9c9c9"></div>
<div class="a" style="left:506px;top:515px;width:11px;height:11px;border-radius:50%;background:#c9c9c9"></div>
<div class="t" style="transform:scaleX(0.8831);transform-origin:0 0;left:497.5px;top:534px;font-size:10px;color:#d8d8d8">Kaydet</div>
<svg class="a" style="left:562px;top:510px" width="21" height="20"><circle cx="9" cy="11" r="7.5" fill="#c9c9c9"/><circle cx="6.3" cy="9.5" r="1.1" fill="#1a1a1a"/><circle cx="11.7" cy="9.5" r="1.1" fill="#1a1a1a"/><path d="M5.5 12.5q3.5 3.5 7 0" fill="none" stroke="#1a1a1a" stroke-width="1.2"/><path d="M17 1v6M14 4h6" stroke="#c9c9c9" stroke-width="1.3"/></svg>
<div class="t" style="transform:scaleX(0.9081);transform-origin:0 0;left:555.7px;top:534px;font-size:10px;color:#d8d8d8">Tepkiler</div>
<div class="a" style="left:728px;top:518.5px;width:46px;height:19px;border-radius:4px;background:#c8262b"></div>
<div class="t" style="transform:scaleX(1.0137);transform-origin:0 0;left:743px;top:523px;font-size:9.5px;font-weight:bold;color:#fff">Çık</div>
<div class="a" style="left:783px;top:17px;width:241px;height:530.5px;background:#fff"></div>
<svg class="a" style="left:797px;top:31px" width="9" height="6"><path d="M1 1L4.5 4.5L8 1" fill="none" stroke="#555" stroke-width="1.1"/></svg>
<div class="t" style="transform:scaleX(0.9747);transform-origin:0 0;left:867px;top:29.5px;font-size:10px;font-weight:bold;color:#232333">Katılımcılar (18)</div>
<div class="a" style="left:797.4px;top:58.4px;width:214.2px;height:23.1px;border-radius:5px;border:1px solid #c8c8d4;background:#fff"></div>
<svg class="a" style="left:805px;top:64.5px" width="11" height="11"><circle cx="4.8" cy="4.8" r="3.6" fill="none" stroke="#777" stroke-width="1.1"/><path d="M7.5 7.5L10.3 10.3" stroke="#777" stroke-width="1.2"/></svg>
<div class="t" style="transform:scaleX(0.9259);transform-origin:0 0;left:818.5px;top:64.5px;font-size:10.5px;color:#80808c">Katılımcı bul</div>
<div class="a" style="left:1016px;top:83px;width:6.5px;height:423px;border-radius:3px;background:#ededf2"></div>
<div class="a" style="left:1016px;top:83.4px;width:6.5px;height:340.2px;border-radius:3px;background:#a8a8b0"></div>
<div class="a" style="left:783px;top:83px;width:233px;height:425px;overflow:hidden">
<div class="a" style="left:16.799999999999955px;top:6.1px;width:19.7px;height:19.7px;border-radius:5px;background:#d9541a"></div>
<div class="t" style="left:16.799999999999955px;top:11.1px;width:19.7px;text-align:center;font-size:10px;font-weight:bold;color:#fff">MK</div>
<div class="t" style="transform:scaleX(0.9140);transform-origin:0 0;left:45.799999999999955px;top:10.4px;font-size:10.5px;color:#3c3c48">Melis Köksal (Ben)</div>
<svg class="a" style="left:192.5px;top:8.9px" width="13" height="14"><path d="M6.5 1.3q2 0 2 2v4q0 2-2 2q-2 0-2-2v-4q0-2 2-2z" fill="none" stroke="#ec6a6a" stroke-width="0.95"/><path d="M2.8 6.5q0 4 3.7 4q3.7 0 3.7-4M6.5 10.5v2.5M4.5 13h4" fill="none" stroke="#ec6a6a" stroke-width="0.95"/><path d="M1.5 13L11.5 1" stroke="#ec6a6a" stroke-width="1"/></svg>
<svg class="a" style="left:209.5px;top:9.9px" width="15" height="12"><rect x="1" y="2.5" width="9" height="7.5" rx="1.5" fill="none" stroke="#ec6a6a" stroke-width="0.95"/><path d="M10 5.3L14 3V9.5L10 7.2" fill="none" stroke="#ec6a6a" stroke-width="0.95"/><path d="M1 11.5L13 0.5" stroke="#ec6a6a" stroke-width="1"/></svg>
<div class="a" style="left:16.799999999999955px;top:37.0px;width:19.7px;height:19.7px;border-radius:5px;overflow:hidden;background:#d8d2ca"><svg width="20" height="20" style="position:absolute;left:0;top:0"><path d="M1 7Q10 1 20 4V8Q10 5 1 11Z" fill="#5a8ac0"/><rect x="0" y="10" width="20" height="7" fill="#2c4c6a"/><path d="M0 11L20 8V10L0 12Z" fill="#1a2a3a"/><rect x="0" y="16" width="20" height="4" fill="#38383a"/><rect x="0" y="0" width="20" height="3" fill="#e8e4de"/></svg></div>
<div class="t" style="transform:scaleX(0.8566);transform-origin:0 0;left:46.299999999999955px;top:41.2px;font-size:10.5px;color:#3c3c48">Ulus ...</div>
<div class="t" style="transform:scaleX(0.9216);transform-origin:0 0;left:85px;top:41.2px;font-size:10.5px;color:#3c3c48">(Oturum Sahibi)</div>
<div class="a" style="left:156.70000000000005px;top:41.900000000000006px;width:12px;height:9px;border-radius:1.5px;background:#1fb14f"></div>
<svg class="a" style="left:159.5px;top:42.8px" width="7" height="7"><path d="M3.5 6.5V1.2M1.3 3.4L3.5 1.2L5.7 3.4" fill="none" stroke="#fff" stroke-width="1.1"/></svg>
<div class="a" style="left:175.70000000000005px;top:41.8px;width:10px;height:10px;border-radius:50%;border:1px solid #9a9aa5"></div>
<div class="a" style="left:179.20000000000005px;top:45.2px;width:3px;height:3px;border-radius:50%;background:#e23b3b"></div>
<svg class="a" style="left:192.5px;top:39.8px" width="13" height="14"><rect x="4.5" y="1" width="4" height="8" rx="2" fill="#8a8a95"/><path d="M2.8 6.5q0 4 3.7 4q3.7 0 3.7-4M6.5 10.5v2.5M4.5 13h4" fill="none" stroke="#8a8a95" stroke-width="1.1"/></svg>
<svg class="a" style="left:209.5px;top:40.8px" width="15" height="12"><rect x="1" y="2.5" width="9" height="7.5" rx="1.5" fill="none" stroke="#8a8a95" stroke-width="1.1"/><path d="M10 5.3L14 3V9.5L10 7.2" fill="none" stroke="#8a8a95" stroke-width="1.1"/></svg>
<div class="a" style="left:16.799999999999955px;top:67.8px;width:19.7px;height:19.7px;border-radius:5px;overflow:hidden;background:#f6f6f8"><svg width="20" height="20" style="position:absolute;left:0;top:0"><path d="M5.5 8Q5.5 2 10 2Q14.5 2 14.5 8Z" fill="#2a2420"/><ellipse cx="10" cy="10" rx="4.3" ry="5.2" fill="#c8987a"/><path d="M5.5 8Q6 3 10 3Q14 3 14.5 8Q12 5.5 10 5.5Q7 5.5 5.5 8Z" fill="#2a2420"/><path d="M2 20Q3 15 10 15.5Q17 15 18 20Z" fill="#203860"/><path d="M8.5 15.5L10 19L11.5 15.5Z" fill="#e8e8f0"/></svg></div>
<div class="t" style="transform:scaleX(0.9072);transform-origin:0 0;left:45.799999999999955px;top:72.1px;font-size:10.5px;color:#3c3c48">Öğr. Gör. Erdal GÜLER</div>
<svg class="a" style="left:192.5px;top:70.6px" width="13" height="14"><rect x="4.5" y="1" width="4" height="8" rx="2" fill="#8a8a95"/><path d="M2.8 6.5q0 4 3.7 4q3.7 0 3.7-4M6.5 10.5v2.5M4.5 13h4" fill="none" stroke="#8a8a95" stroke-width="1.1"/></svg>
<svg class="a" style="left:209.5px;top:71.6px" width="15" height="12"><rect x="1" y="2.5" width="9" height="7.5" rx="1.5" fill="none" stroke="#8a8a95" stroke-width="1.1"/><path d="M10 5.3L14 3V9.5L10 7.2" fill="none" stroke="#8a8a95" stroke-width="1.1"/></svg>
<div class="a" style="left:16.799999999999955px;top:98.7px;width:19.7px;height:19.7px;border-radius:5px;background:#c43c2e"></div>
<div class="t" style="left:16.799999999999955px;top:103.7px;width:19.7px;text-align:center;font-size:11px;font-weight:bold;color:#fff">Ö</div>
<div class="t" style="transform:scaleX(1.0073);transform-origin:0 0;left:45.799999999999955px;top:103.0px;font-size:10.5px;color:#3c3c48">Özer Çulhaoğlu</div>
<svg class="a" style="left:192.5px;top:101.5px" width="13" height="14"><rect x="4.5" y="1" width="4" height="8" rx="2" fill="#8a8a95"/><path d="M2.8 6.5q0 4 3.7 4q3.7 0 3.7-4M6.5 10.5v2.5M4.5 13h4" fill="none" stroke="#8a8a95" stroke-width="1.1"/></svg>
<svg class="a" style="left:209.5px;top:102.5px" width="15" height="12"><rect x="1" y="2.5" width="9" height="7.5" rx="1.5" fill="none" stroke="#8a8a95" stroke-width="1.1"/><path d="M10 5.3L14 3V9.5L10 7.2" fill="none" stroke="#8a8a95" stroke-width="1.1"/></svg>
<div class="a" style="left:16.799999999999955px;top:129.5px;width:19.7px;height:19.7px;border-radius:5px;background:#1d9b7f"></div>
<div class="t" style="left:16.799999999999955px;top:134.5px;width:19.7px;text-align:center;font-size:10px;font-weight:bold;color:#fff">AV</div>
<div class="t" style="transform:scaleX(0.8704);transform-origin:0 0;left:45.799999999999955px;top:133.8px;font-size:10.5px;color:#3c3c48">Ali Vasfi AĞLARCI</div>
<svg class="a" style="left:192.5px;top:132.3px" width="13" height="14"><path d="M6.5 1.3q2 0 2 2v4q0 2-2 2q-2 0-2-2v-4q0-2 2-2z" fill="none" stroke="#ec6a6a" stroke-width="0.95"/><path d="M2.8 6.5q0 4 3.7 4q3.7 0 3.7-4M6.5 10.5v2.5M4.5 13h4" fill="none" stroke="#ec6a6a" stroke-width="0.95"/><path d="M1.5 13L11.5 1" stroke="#ec6a6a" stroke-width="1"/></svg>
<svg class="a" style="left:209.5px;top:133.3px" width="15" height="12"><rect x="1" y="2.5" width="9" height="7.5" rx="1.5" fill="none" stroke="#8a8a95" stroke-width="1.1"/><path d="M10 5.3L14 3V9.5L10 7.2" fill="none" stroke="#8a8a95" stroke-width="1.1"/></svg>
<div class="a" style="left:16.799999999999955px;top:160.3px;width:19.7px;height:19.7px;border-radius:5px;background:#f2a01f"></div>
<div class="t" style="left:16.799999999999955px;top:165.3px;width:19.7px;text-align:center;font-size:10px;font-weight:bold;color:#fff">BK</div>
<div class="t" style="transform:scaleX(0.8764);transform-origin:0 0;left:45.799999999999955px;top:164.7px;font-size:10.5px;color:#3c3c48">Bayram Kalpaklı</div>
<svg class="a" style="left:192.5px;top:163.2px" width="13" height="14"><path d="M6.5 1.3q2 0 2 2v4q0 2-2 2q-2 0-2-2v-4q0-2 2-2z" fill="none" stroke="#ec6a6a" stroke-width="0.95"/><path d="M2.8 6.5q0 4 3.7 4q3.7 0 3.7-4M6.5 10.5v2.5M4.5 13h4" fill="none" stroke="#ec6a6a" stroke-width="0.95"/><path d="M1.5 13L11.5 1" stroke="#ec6a6a" stroke-width="1"/></svg>
<svg class="a" style="left:209.5px;top:164.2px" width="15" height="12"><rect x="1" y="2.5" width="9" height="7.5" rx="1.5" fill="none" stroke="#ec6a6a" stroke-width="0.95"/><path d="M10 5.3L14 3V9.5L10 7.2" fill="none" stroke="#ec6a6a" stroke-width="0.95"/><path d="M1 11.5L13 0.5" stroke="#ec6a6a" stroke-width="1"/></svg>
<div class="a" style="left:16.799999999999955px;top:191.2px;width:19.7px;height:19.7px;border-radius:5px;overflow:hidden;background:#5a4028"><svg width="20" height="20" style="position:absolute;left:0;top:0"><rect x="0" y="0" width="4" height="20" fill="#7a5a30"/><rect x="16" y="0" width="4" height="20" fill="#6a4a28"/><path d="M5 7Q5 1 10 1Q15 1 15 7V9H5Z" fill="#2a2018"/><ellipse cx="10" cy="10" rx="5" ry="6" fill="#c89070"/><path d="M5 7Q5 2 10 2Q15 2 15 7Q12 5 8 5Q6 6 5 7Z" fill="#2a2018"/><path d="M6 9h8" stroke="#333" stroke-width="1.2"/><path d="M6 13Q10 18 14 13V16Q10 19 6 16Z" fill="#3a2818"/><path d="M1 20Q3 15 10 16Q17 15 19 20Z" fill="#202830"/><path d="M8 17L10 20L12 17Z" fill="#c8d8e8"/></svg></div>
<div class="t" style="transform:scaleX(0.8787);transform-origin:0 0;left:45.799999999999955px;top:195.5px;font-size:10.5px;color:#3c3c48">Bilge TUNÇKOL</div>
<svg class="a" style="left:192.5px;top:194.0px" width="13" height="14"><path d="M6.5 1.3q2 0 2 2v4q0 2-2 2q-2 0-2-2v-4q0-2 2-2z" fill="none" stroke="#ec6a6a" stroke-width="0.95"/><path d="M2.8 6.5q0 4 3.7 4q3.7 0 3.7-4M6.5 10.5v2.5M4.5 13h4" fill="none" stroke="#ec6a6a" stroke-width="0.95"/><path d="M1.5 13L11.5 1" stroke="#ec6a6a" stroke-width="1"/></svg>
<svg class="a" style="left:209.5px;top:195.0px" width="15" height="12"><rect x="1" y="2.5" width="9" height="7.5" rx="1.5" fill="none" stroke="#ec6a6a" stroke-width="0.95"/><path d="M10 5.3L14 3V9.5L10 7.2" fill="none" stroke="#ec6a6a" stroke-width="0.95"/><path d="M1 11.5L13 0.5" stroke="#ec6a6a" stroke-width="1"/></svg>
<div class="a" style="left:16.799999999999955px;top:222.1px;width:19.7px;height:19.7px;border-radius:5px;overflow:hidden;background:#f6f6f8"><svg width="20" height="20" style="position:absolute;left:0;top:0"><path d="M5.5 8Q5.5 2 10 2Q14.5 2 14.5 8Z" fill="#1e1a18"/><ellipse cx="10" cy="10" rx="4.3" ry="5.2" fill="#c8987a"/><path d="M5.5 8Q6 3 10 3Q14 3 14.5 8Q12 5.5 10 5.5Q7 5.5 5.5 8Z" fill="#1e1a18"/><path d="M2 20Q3 15 10 15.5Q17 15 18 20Z" fill="#304048"/><path d="M8.5 15.5L10 19L11.5 15.5Z" fill="#e8e8f0"/></svg></div>
<div class="t" style="transform:scaleX(0.9068);transform-origin:0 0;left:45.799999999999955px;top:226.4px;font-size:10.5px;color:#3c3c48">Eren Gürsoy ÖZDEMİR</div>
<svg class="a" style="left:192.5px;top:224.9px" width="13" height="14"><path d="M6.5 1.3q2 0 2 2v4q0 2-2 2q-2 0-2-2v-4q0-2 2-2z" fill="none" stroke="#ec6a6a" stroke-width="0.95"/><path d="M2.8 6.5q0 4 3.7 4q3.7 0 3.7-4M6.5 10.5v2.5M4.5 13h4" fill="none" stroke="#ec6a6a" stroke-width="0.95"/><path d="M1.5 13L11.5 1" stroke="#ec6a6a" stroke-width="1"/></svg>
<svg class="a" style="left:209.5px;top:225.9px" width="15" height="12"><rect x="1" y="2.5" width="9" height="7.5" rx="1.5" fill="none" stroke="#8a8a95" stroke-width="1.1"/><path d="M10 5.3L14 3V9.5L10 7.2" fill="none" stroke="#8a8a95" stroke-width="1.1"/></svg>
<div class="a" style="left:16.799999999999955px;top:252.9px;width:19.7px;height:19.7px;border-radius:5px;background:#2bb24c"></div>
<div class="t" style="left:16.799999999999955px;top:257.9px;width:19.7px;text-align:center;font-size:10px;font-weight:bold;color:#fff">GB</div>
<div class="t" style="transform:scaleX(0.8509);transform-origin:0 0;left:45.799999999999955px;top:257.2px;font-size:10.5px;color:#3c3c48">Gözde BUHARALI</div>
<svg class="a" style="left:192.5px;top:255.7px" width="13" height="14"><path d="M6.5 1.3q2 0 2 2v4q0 2-2 2q-2 0-2-2v-4q0-2 2-2z" fill="none" stroke="#ec6a6a" stroke-width="0.95"/><path d="M2.8 6.5q0 4 3.7 4q3.7 0 3.7-4M6.5 10.5v2.5M4.5 13h4" fill="none" stroke="#ec6a6a" stroke-width="0.95"/><path d="M1.5 13L11.5 1" stroke="#ec6a6a" stroke-width="1"/></svg>
<svg class="a" style="left:209.5px;top:256.7px" width="15" height="12"><rect x="1" y="2.5" width="9" height="7.5" rx="1.5" fill="none" stroke="#8a8a95" stroke-width="1.1"/><path d="M10 5.3L14 3V9.5L10 7.2" fill="none" stroke="#8a8a95" stroke-width="1.1"/></svg>
<div class="a" style="left:16.799999999999955px;top:283.8px;width:19.7px;height:19.7px;border-radius:5px;overflow:hidden;background:#ffffff"><svg width="20" height="20" style="position:absolute;left:0;top:0"><path d="M9 2Q14 1 16 5Q17 8 15 10L9 8Z" fill="#202020"/><path d="M3 12Q6 8 10 8L11 17Q7 18 3 16Z" fill="#303030"/><path d="M10 8Q15 9 17 13L16 17H11Z" fill="#e8e8e8"/><path d="M8 5L11 9L10 18L8 17Z" fill="#d0a888"/></svg></div>
<div class="t" style="transform:scaleX(0.8198);transform-origin:0 0;left:45.799999999999955px;top:288.1px;font-size:10.5px;color:#3c3c48">Halide AKKUŞ</div>
<svg class="a" style="left:192.5px;top:286.6px" width="13" height="14"><path d="M6.5 1.3q2 0 2 2v4q0 2-2 2q-2 0-2-2v-4q0-2 2-2z" fill="none" stroke="#ec6a6a" stroke-width="0.95"/><path d="M2.8 6.5q0 4 3.7 4q3.7 0 3.7-4M6.5 10.5v2.5M4.5 13h4" fill="none" stroke="#ec6a6a" stroke-width="0.95"/><path d="M1.5 13L11.5 1" stroke="#ec6a6a" stroke-width="1"/></svg>
<svg class="a" style="left:209.5px;top:287.6px" width="15" height="12"><rect x="1" y="2.5" width="9" height="7.5" rx="1.5" fill="none" stroke="#ec6a6a" stroke-width="0.95"/><path d="M10 5.3L14 3V9.5L10 7.2" fill="none" stroke="#ec6a6a" stroke-width="0.95"/><path d="M1 11.5L13 0.5" stroke="#ec6a6a" stroke-width="1"/></svg>
<div class="a" style="left:16.799999999999955px;top:314.6px;width:19.7px;height:19.7px;border-radius:5px;background:#1a9e8a"></div>
<div class="t" style="left:16.799999999999955px;top:319.6px;width:19.7px;text-align:center;font-size:10px;font-weight:bold;color:#fff">HK</div>
<div class="t" style="transform:scaleX(0.8107);transform-origin:0 0;left:45.799999999999955px;top:318.9px;font-size:10.5px;color:#3c3c48">Hatice KARACA</div>
<svg class="a" style="left:192.5px;top:317.4px" width="13" height="14"><path d="M6.5 1.3q2 0 2 2v4q0 2-2 2q-2 0-2-2v-4q0-2 2-2z" fill="none" stroke="#ec6a6a" stroke-width="0.95"/><path d="M2.8 6.5q0 4 3.7 4q3.7 0 3.7-4M6.5 10.5v2.5M4.5 13h4" fill="none" stroke="#ec6a6a" stroke-width="0.95"/><path d="M1.5 13L11.5 1" stroke="#ec6a6a" stroke-width="1"/></svg>
<svg class="a" style="left:209.5px;top:318.4px" width="15" height="12"><rect x="1" y="2.5" width="9" height="7.5" rx="1.5" fill="none" stroke="#8a8a95" stroke-width="1.1"/><path d="M10 5.3L14 3V9.5L10 7.2" fill="none" stroke="#8a8a95" stroke-width="1.1"/></svg>
<div class="a" style="left:16.799999999999955px;top:345.4px;width:19.7px;height:19.7px;border-radius:5px;overflow:hidden;background:#f6f6f8"><svg width="20" height="20" style="position:absolute;left:0;top:0"><path d="M5.5 8Q5.5 2 10 2Q14.5 2 14.5 8Z" fill="#1e1a18"/><ellipse cx="10" cy="10" rx="4.3" ry="5.2" fill="#c8987a"/><path d="M5.5 8Q6 3 10 3Q14 3 14.5 8Q12 5.5 10 5.5Q7 5.5 5.5 8Z" fill="#1e1a18"/><path d="M2 20Q3 15 10 15.5Q17 15 18 20Z" fill="#181818"/><path d="M8.5 15.5L10 19L11.5 15.5Z" fill="#e8e8f0"/></svg></div>
<div class="t" style="transform:scaleX(0.9287);transform-origin:0 0;left:45.799999999999955px;top:349.8px;font-size:10.5px;color:#3c3c48">Kadri Akçalı</div>
<svg class="a" style="left:192.5px;top:348.2px" width="13" height="14"><path d="M6.5 1.3q2 0 2 2v4q0 2-2 2q-2 0-2-2v-4q0-2 2-2z" fill="none" stroke="#ec6a6a" stroke-width="0.95"/><path d="M2.8 6.5q0 4 3.7 4q3.7 0 3.7-4M6.5 10.5v2.5M4.5 13h4" fill="none" stroke="#ec6a6a" stroke-width="0.95"/><path d="M1.5 13L11.5 1" stroke="#ec6a6a" stroke-width="1"/></svg>
<svg class="a" style="left:209.5px;top:349.2px" width="15" height="12"><rect x="1" y="2.5" width="9" height="7.5" rx="1.5" fill="none" stroke="#8a8a95" stroke-width="1.1"/><path d="M10 5.3L14 3V9.5L10 7.2" fill="none" stroke="#8a8a95" stroke-width="1.1"/></svg>
<div class="a" style="left:16.799999999999955px;top:376.3px;width:19.7px;height:19.7px;border-radius:5px;background:#3d4f66"></div>
<div class="t" style="left:16.799999999999955px;top:381.3px;width:19.7px;text-align:center;font-size:10px;font-weight:bold;color:#fff">MG</div>
<div class="t" style="transform:scaleX(0.8569);transform-origin:0 0;left:45.799999999999955px;top:380.6px;font-size:10.5px;color:#3c3c48">Mustafa GÖKDAĞ</div>
<svg class="a" style="left:192.5px;top:379.1px" width="13" height="14"><path d="M6.5 1.3q2 0 2 2v4q0 2-2 2q-2 0-2-2v-4q0-2 2-2z" fill="none" stroke="#ec6a6a" stroke-width="0.95"/><path d="M2.8 6.5q0 4 3.7 4q3.7 0 3.7-4M6.5 10.5v2.5M4.5 13h4" fill="none" stroke="#ec6a6a" stroke-width="0.95"/><path d="M1.5 13L11.5 1" stroke="#ec6a6a" stroke-width="1"/></svg>
<svg class="a" style="left:209.5px;top:380.1px" width="15" height="12"><rect x="1" y="2.5" width="9" height="7.5" rx="1.5" fill="none" stroke="#ec6a6a" stroke-width="0.95"/><path d="M10 5.3L14 3V9.5L10 7.2" fill="none" stroke="#ec6a6a" stroke-width="0.95"/><path d="M1 11.5L13 0.5" stroke="#ec6a6a" stroke-width="1"/></svg>
<div class="a" style="left:16.799999999999955px;top:407.2px;width:19.7px;height:19.7px;border-radius:5px;overflow:hidden;background:linear-gradient(180deg,#5a98e0 0%,#8ab8e8 35%,#5a5040 55%,#3a3428 100%)"><svg width="20" height="20" style="position:absolute;left:0;top:0"><path d="M12 8Q15 6 18 9V20H12Z" fill="#8a7040"/><circle cx="10" cy="8" r="3" fill="#2a2a30"/><ellipse cx="10" cy="10" rx="2.8" ry="3.2" fill="#b89070"/><path d="M3 20Q4 14 10 14Q16 14 17 20Z" fill="#3a5a48"/></svg></div>
<div class="t" style="transform:scaleX(0.9497);transform-origin:0 0;left:45.799999999999955px;top:411.5px;font-size:10.5px;color:#3c3c48">Nevzat Ada</div>
<svg class="a" style="left:192.5px;top:410.0px" width="13" height="14"><path d="M6.5 1.3q2 0 2 2v4q0 2-2 2q-2 0-2-2v-4q0-2 2-2z" fill="none" stroke="#ec6a6a" stroke-width="0.95"/><path d="M2.8 6.5q0 4 3.7 4q3.7 0 3.7-4M6.5 10.5v2.5M4.5 13h4" fill="none" stroke="#ec6a6a" stroke-width="0.95"/><path d="M1.5 13L11.5 1" stroke="#ec6a6a" stroke-width="1"/></svg>
<svg class="a" style="left:209.5px;top:411.0px" width="15" height="12"><rect x="1" y="2.5" width="9" height="7.5" rx="1.5" fill="none" stroke="#ec6a6a" stroke-width="0.95"/><path d="M10 5.3L14 3V9.5L10 7.2" fill="none" stroke="#ec6a6a" stroke-width="0.95"/><path d="M1 11.5L13 0.5" stroke="#ec6a6a" stroke-width="1"/></svg>
</div>
<div class="a" style="left:833px;top:520px;width:43.5px;height:17px;border-radius:4px;background:#ededf2"></div>
<div class="t" style="transform:scaleX(0.8591);transform-origin:0 0;left:838.5px;top:523.5px;font-size:10px;color:#232333">Davet et</div>
<div class="a" style="left:925px;top:520px;width:50px;height:17px;border-radius:4px;background:#ededf2"></div>
<div class="t" style="transform:scaleX(0.8769);transform-origin:0 0;left:930.7px;top:523.5px;font-size:10px;color:#232333">Sesimi Aç</div>
<div class="a" style="left:0;top:547.5px;width:1024px;height:30.5px;background:#0f151b"></div>
<svg class="a" style="left:11.5px;top:556.5px" width="13" height="13"><path d="M0 1.8L5.6 1V6.1H0Z M6.3 0.9L13 0V6.1H6.3Z M0 6.9H5.6V12L0 11.2Z M6.3 6.9H13V13L6.3 12.1Z" fill="#fff"/></svg>
<svg class="a" style="left:47px;top:555px" width="14" height="14"><circle cx="8.5" cy="5.5" r="4.3" fill="none" stroke="#fff" stroke-width="1.2"/><path d="M5.3 8.7L1 13" stroke="#fff" stroke-width="1.4"/></svg>
<svg class="a" style="left:83px;top:555.5px" width="14" height="14"><rect x="2" y="3" width="8" height="8" fill="none" stroke="#fff" stroke-width="1.1"/><path d="M1 1h10M1 13h10M12.5 3v3M12.5 8v3" stroke="#fff" stroke-width="1.1"/></svg>
<svg class="a" style="left:119.5px;top:554px" width="18" height="16"><path d="M1 2h6l2 2h8v11H1z" fill="#e8b84a"/><rect x="1" y="5.5" width="16" height="9.5" fill="#f5cf60"/><rect x="5.5" y="9" width="7" height="6" fill="#2a8ad8"/><rect x="7" y="11" width="4" height="4" fill="#f5cf60"/></svg>
<div class="a" style="left:114px;top:576px;width:30px;height:2px;background:#8ab8e0"></div>
<svg class="a" style="left:156.5px;top:553.5px" width="18" height="18"><path d="M6 4q0-3 3-3q3 0 3 3" fill="none" stroke="#3ab0e8" stroke-width="1.3"/><rect x="1" y="4" width="16" height="13" rx="2" fill="#f4f4f4"/><rect x="5" y="7.5" width="3.5" height="3.5" fill="#f25022"/><rect x="9.5" y="7.5" width="3.5" height="3.5" fill="#7fba00"/><rect x="5" y="12" width="3.5" height="3.5" fill="#00a4ef"/><rect x="9.5" y="12" width="3.5" height="3.5" fill="#ffb900"/></svg>
<svg class="a" style="left:193px;top:553.5px" width="19" height="19"><defs><radialGradient id="ffg" cx="0.35" cy="0.3" r="0.9"><stop offset="0" stop-color="#ffe040"/><stop offset="0.45" stop-color="#ff7a1a"/><stop offset="0.8" stop-color="#ff2a6a"/><stop offset="1" stop-color="#c02090"/></radialGradient></defs><circle cx="9.2" cy="10" r="8.3" fill="url(#ffg)"/><path d="M12 1.5Q14 4 13.5 6L16 3.5Q18 7 17 10Z" fill="#ffb020"/><circle cx="10.5" cy="9" r="4" fill="#7a3ad8"/><path d="M4 6Q6 2.5 9 3Q7 5 8 7Z" fill="#ffa028"/></svg>
<svg class="a" style="left:230px;top:553.5px" width="19" height="19"><defs><linearGradient id="edg" x1="0" y1="0" x2="1" y2="1"><stop offset="0" stop-color="#30a8e8"/><stop offset="0.55" stop-color="#36c0a0"/><stop offset="1" stop-color="#60d060"/></linearGradient></defs><circle cx="9.5" cy="9.5" r="8.8" fill="url(#edg)"/><path d="M0.8 10Q1 18 9.5 18.3Q14 18.3 16.5 15Q12 16.5 9 14Q6 12 7.5 9.5Q9 7.5 12 8.5Q9 5 5 6.5Q1 8 0.8 10Z" fill="#1a60b8"/><circle cx="10.5" cy="11" r="2.8" fill="#0f151b"/></svg>
<svg class="a" style="left:267.5px;top:553px" width="21" height="21"><circle cx="9" cy="8.8" r="8.3" fill="#34a853"/><path d="M9 8.8L1.8 4.6A8.3 8.3 0 0 1 16.2 4.6Z" fill="#ea4335"/><path d="M9 8.8L16.2 4.6A8.3 8.3 0 0 1 9 17.1Z" fill="#fbbc05"/><circle cx="9" cy="8.8" r="3.9" fill="#fff"/><circle cx="9" cy="8.8" r="3" fill="#4285f4"/><circle cx="13.5" cy="14.3" r="5.8" fill="#e8e8ea" stroke="#0f151b" stroke-width="1"/><circle cx="13.5" cy="12.6" r="1.7" fill="#5a5e66"/><path d="M10.5 17.3Q10.8 14.8 13.5 14.8Q16.2 14.8 16.5 17.3Z" fill="#5a5e66"/></svg>
<div class="a" style="left:261px;top:576px;width:30px;height:2px;background:#8ab8e0"></div>
<div class="a" style="left:304.5px;top:554px;width:17px;height:17px;border-radius:50%;background:#e8152a"></div>
<div class="a" style="left:309.5px;top:556px;width:7px;height:13px;border-radius:50%;background:#0f151b"></div>
<svg class="a" style="left:341px;top:554px" width="18" height="17"><rect x="5" y="1" width="12" height="15" rx="1" fill="#f0f4fa"/><path d="M8 4h7M8 6.5h7M8 9h7M8 11.5h7" stroke="#2b5fb0" stroke-width="1"/><rect x="1" y="3.5" width="10" height="10" rx="1" fill="#1e4fa0"/><path d="M2.5 5.5L4 11.5L6 7L8 11.5L9.5 5.5" fill="none" stroke="#fff" stroke-width="1"/></svg>
<div class="a" style="left:335px;top:576px;width:30px;height:2px;background:#8ab8e0"></div>
<div class="a" style="left:368.75px;top:547.5px;width:36px;height:30.5px;background:#3a4048"></div>
<div class="a" style="left:378px;top:554px;width:17.5px;height:17.5px;border-radius:4px;background:#4a8cff"></div>
<div class="a" style="left:381.5px;top:559.5px;width:7.5px;height:6.5px;border-radius:1.5px;background:#fff"></div>
<div class="a" style="left:389.5px;top:560px;width:0;height:0;border-top:2.8px solid transparent;border-bottom:2.8px solid transparent;border-right:3.5px solid #fff"></div>
<div class="a" style="left:368.75px;top:576px;width:36px;height:2px;background:#8ab8e0"></div>
<div class="a" style="left:733px;top:556px;width:15px;height:15px;border-radius:50%;background:radial-gradient(circle at 45% 40%,#ffe070 0%,#ffc020 60%,#f0a000 100%)"></div>
<div class="t" style="transform:scaleX(0.9204);transform-origin:0 0;left:755.4px;top:557.5px;font-size:10.5px;color:#fff">22°C</div>
<div class="t" style="transform:scaleX(0.9492);transform-origin:0 0;left:783.9px;top:557.5px;font-size:10.5px;color:#fff">Güneşli</div>
<svg class="a" style="left:830.5px;top:559px" width="10" height="6"><path d="M1 5L5 1L9 5" fill="none" stroke="#fff" stroke-width="1.1"/></svg>
<svg class="a" style="left:847px;top:556px" width="12" height="14"><rect x="2" y="3" width="8" height="7" rx="2" fill="none" stroke="#fff" stroke-width="1"/><path d="M4 1h4M6 10v3M3 13h6" stroke="#fff" stroke-width="1"/><circle cx="6" cy="6.5" r="1.5" fill="#fff"/></svg>
<svg class="a" style="left:864.5px;top:556px" width="14" height="13"><rect x="1" y="1.5" width="10" height="7" fill="none" stroke="#fff" stroke-width="1"/><path d="M6 8.5v3M3 12h6" stroke="#fff" stroke-width="1"/><rect x="9" y="0.5" width="4" height="5" fill="#0f151b" stroke="#fff" stroke-width="0.8"/></svg>
<svg class="a" style="left:884px;top:555px" width="10" height="15"><rect x="2.5" y="1" width="5" height="9" rx="2.5" fill="#e8e8e8"/><path d="M1 7q0 4.5 4 4.5q4 0 4-4.5M5 11.5v2.5" fill="none" stroke="#e8e8e8" stroke-width="1"/></svg>
<svg class="a" style="left:900px;top:557px" width="13" height="12"><path d="M1 4h2.5L7 1V11L3.5 8H1z" fill="none" stroke="#fff" stroke-width="1"/><path d="M9 4q1.5 2 0 4M11 2.5q2.5 3.5 0 7" fill="none" stroke="#fff" stroke-width="0.9"/></svg>
<svg class="a" style="left:918px;top:557px" width="15" height="11"><path d="M3.5 10.5q-3 0-3-3q0-2.5 2.5-3q0.5-3.5 4.5-3.5q3 0 4 2.5q3 0 3 3.5q0 3.5-3 3.5z" fill="#fff"/><path d="M7.5 3.5v4M7.5 8.5v1" stroke="#0f151b" stroke-width="1.1"/></svg>
<div class="t" style="transform:scaleX(0.8410);transform-origin:0 0;left:949px;top:551px;font-size:9.5px;color:#fff">12:14</div>
<div class="t" style="transform:scaleX(0.8497);transform-origin:0 0;left:939px;top:563.5px;font-size:9.5px;color:#fff">27.04.2022</div>
<svg class="a" style="left:992px;top:556px" width="15" height="14"><path d="M1 1h13v9H6.5L3.5 13V10H1z" fill="none" stroke="#fff" stroke-width="1.1"/></svg>
<!--BOTEND-->

</div>
</body></html>
